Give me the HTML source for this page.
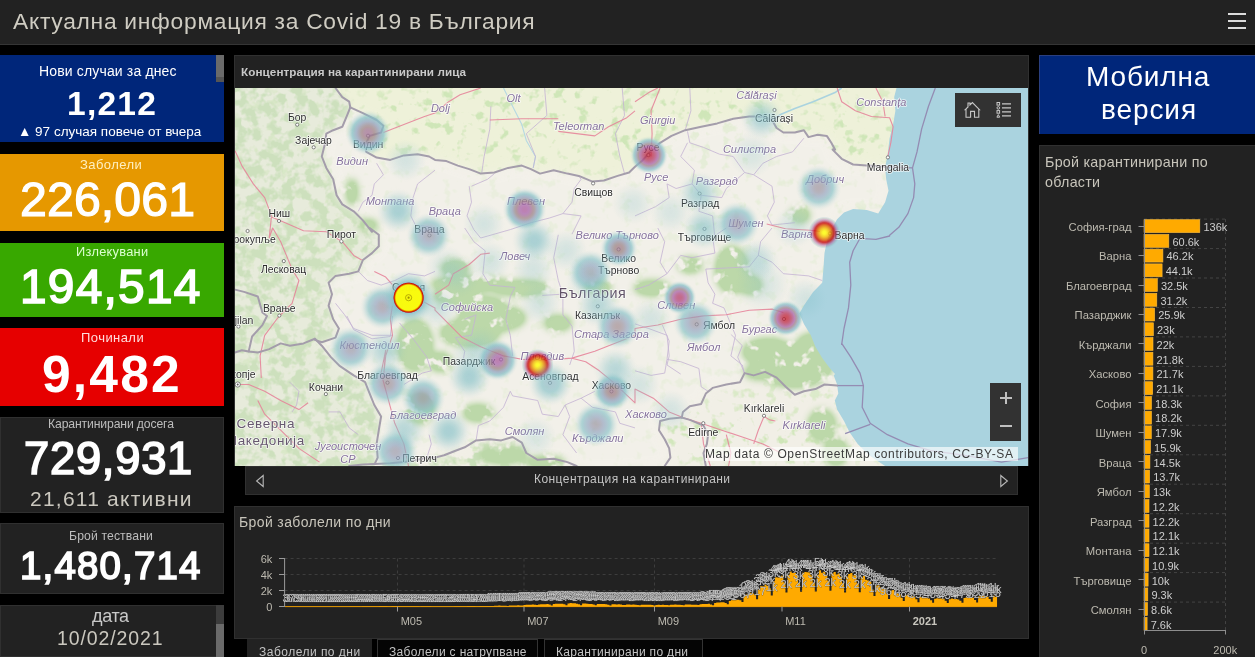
<!DOCTYPE html>
<html lang="bg">
<head>
<meta charset="utf-8">
<title>Актуална информация за Covid 19 в България</title>
<style>
html,body{margin:0;padding:0;background:#000;}
body{width:1255px;height:657px;overflow:hidden;position:relative;font-family:"Liberation Sans",sans-serif;color:#ccc;}
.abs{position:absolute;}
svg{will-change:transform;}
.t{position:absolute;white-space:nowrap;line-height:1;will-change:transform;}
.c{text-align:center;left:0;width:224px;}
#hdr{left:0;top:0;width:1255px;height:44px;background:#222;border-bottom:1px solid #353535;}
.card{position:absolute;left:0;width:224px;overflow:hidden;}
.dk{background:#222;box-shadow:inset 0 0 0 1px #303030;}
.panel{position:absolute;background:#222;box-shadow:inset 0 0 0 1px #303030;}
.big{color:#fff;-webkit-text-stroke:0.7px #fff;}
</style>
</head>
<body>
<div id="hdr" class="abs">
  <div class="abs" style="left:1228px;top:13px;width:18px;height:2px;background:#dcdcdc;box-shadow:0 7px 0 #dcdcdc,0 14px 0 #dcdcdc;"></div>
</div>

<!-- left column cards -->
<div class="card" style="top:55px;height:87px;background:#00267a;">
  <div class="abs" style="left:216px;top:0;width:8px;height:22px;background:#6a6a6a;"></div>
  <div class="abs" style="left:216px;top:22px;width:8px;height:5px;background:#555;"></div>
</div>
<div class="card" style="top:154px;height:77px;background:#e69800;"></div>
<div class="card" style="top:243px;height:74px;background:#38a800;"></div>
<div class="card" style="top:328px;height:78px;background:#e60000;"></div>
<div class="card dk" style="top:417px;height:96px;"></div>
<div class="card dk" style="top:523px;height:71px;"></div>
<div class="card dk" style="top:605px;height:52px;">
  <div class="abs" style="left:216px;top:0;width:8px;height:60px;background:#3c3c3c;"></div>
  <div class="abs" style="left:216px;top:19px;width:8px;height:41px;background:#6a6a6a;"></div>
</div>

<!-- right column -->
<div class="abs" style="left:1039px;top:55px;width:216px;height:79px;background:#00267a;box-shadow:inset 1px 1px 0 #2a3f7f;"></div>
<div class="panel" style="left:1039px;top:145px;width:220px;height:520px;"></div>

<!-- centre panels -->
<div class="panel" style="left:234px;top:55px;width:795px;height:411px;"></div>
<div class="panel" style="left:245px;top:466px;width:773px;height:29px;"></div>
<div class="panel" style="left:234px;top:506px;width:795px;height:133px;"></div>
<!-- tabs -->
<div class="abs" style="left:247px;top:639px;width:125px;height:25px;background:#222;"></div>
<div class="abs" style="left:377px;top:639px;width:161px;height:25px;background:#050505;box-shadow:inset 0 0 0 1px #333;"></div>
<div class="abs" style="left:544px;top:639px;width:159px;height:25px;background:#050505;box-shadow:inset 0 0 0 1px #333;"></div>
<svg class="abs" style="left:235px;top:88px;" width="793" height="378" viewBox="235 88 793 378" font-family="Liberation Sans, sans-serif">
<defs>
<filter id="ff" x="0" y="0" width="100%" height="100%" filterUnits="objectBoundingBox" color-interpolation-filters="sRGB">
<feGaussianBlur in="SourceAlpha" stdDeviation="3.5" result="m"/>
<feTurbulence type="fractalNoise" baseFrequency="0.07" numOctaves="3" seed="7" result="n"/>
<feColorMatrix in="n" type="matrix" values="0 0 0 0 0 0 0 0 0 0 0 0 0 0 0 6 0 0 0 -1.6" result="na"/>
<feComposite in="m" in2="na" operator="arithmetic" k1="1.6" k2="0" k3="0" k4="0" result="a"/>
<feFlood flood-color="#bcd8a9"/><feComposite operator="in" in2="a"/></filter>
<filter id="fl" x="0" y="0" width="100%" height="100%" color-interpolation-filters="sRGB">
<feGaussianBlur in="SourceAlpha" stdDeviation="10" result="m"/>
<feTurbulence type="fractalNoise" baseFrequency="0.09" numOctaves="3" seed="11" result="n"/>
<feColorMatrix in="n" type="matrix" values="0 0 0 0 0 0 0 0 0 0 0 0 0 0 0 6 0 0 0 -3.45" result="na"/>
<feComposite in="m" in2="na" operator="arithmetic" k1="1.2" k2="0" k3="0" k4="0" result="a"/>
<feFlood flood-color="#cfe6b8"/><feComposite operator="in" in2="a"/></filter>
<filter id="fw" x="0" y="0" width="100%" height="100%" color-interpolation-filters="sRGB">
<feGaussianBlur in="SourceAlpha" stdDeviation="3" result="m"/>
<feTurbulence type="fractalNoise" baseFrequency="0.085" numOctaves="3" seed="5" result="n"/>
<feColorMatrix in="n" type="matrix" values="0 0 0 0 0 0 0 0 0 0 0 0 0 0 0 6 0 0 0 -2.6" result="na"/>
<feComposite in="m" in2="na" operator="arithmetic" k1="1" k2="0" k3="0" k4="0" result="a"/>
<feFlood flood-color="#c9dfb9"/><feComposite operator="in" in2="a"/></filter>
<filter id="hz" x="-5%" y="-5%" width="110%" height="110%"><feGaussianBlur stdDeviation="5"/></filter>
<radialGradient id="h0"><stop offset="0.000" stop-color="rgb(162,113,151)" stop-opacity="0.74"/><stop offset="0.062" stop-color="rgb(161,114,150)" stop-opacity="0.74"/><stop offset="0.125" stop-color="rgb(160,116,147)" stop-opacity="0.74"/><stop offset="0.188" stop-color="rgb(159,120,142)" stop-opacity="0.74"/><stop offset="0.250" stop-color="rgb(157,126,135)" stop-opacity="0.74"/><stop offset="0.312" stop-color="rgb(154,134,140)" stop-opacity="0.74"/><stop offset="0.375" stop-color="rgb(151,142,156)" stop-opacity="0.74"/><stop offset="0.438" stop-color="rgb(148,152,173)" stop-opacity="0.74"/><stop offset="0.500" stop-color="rgb(144,162,190)" stop-opacity="0.74"/><stop offset="0.562" stop-color="rgb(140,173,194)" stop-opacity="0.74"/><stop offset="0.625" stop-color="rgb(136,183,197)" stop-opacity="0.74"/><stop offset="0.688" stop-color="rgb(133,193,200)" stop-opacity="0.72"/><stop offset="0.750" stop-color="rgb(133,193,200)" stop-opacity="0.50"/><stop offset="0.812" stop-color="rgb(133,193,200)" stop-opacity="0.30"/><stop offset="0.875" stop-color="rgb(133,193,200)" stop-opacity="0.14"/><stop offset="0.938" stop-color="rgb(133,193,200)" stop-opacity="0.04"/><stop offset="1.000" stop-color="rgb(133,193,200)" stop-opacity="0.00"/></radialGradient>
<radialGradient id="h1"><stop offset="0.000" stop-color="rgb(133,193,200)" stop-opacity="0.27"/><stop offset="0.062" stop-color="rgb(133,193,200)" stop-opacity="0.27"/><stop offset="0.125" stop-color="rgb(133,193,200)" stop-opacity="0.26"/><stop offset="0.188" stop-color="rgb(133,193,200)" stop-opacity="0.25"/><stop offset="0.250" stop-color="rgb(133,193,200)" stop-opacity="0.24"/><stop offset="0.312" stop-color="rgb(133,193,200)" stop-opacity="0.22"/><stop offset="0.375" stop-color="rgb(133,193,200)" stop-opacity="0.20"/><stop offset="0.438" stop-color="rgb(133,193,200)" stop-opacity="0.18"/><stop offset="0.500" stop-color="rgb(133,193,200)" stop-opacity="0.15"/><stop offset="0.562" stop-color="rgb(133,193,200)" stop-opacity="0.13"/><stop offset="0.625" stop-color="rgb(133,193,200)" stop-opacity="0.10"/><stop offset="0.688" stop-color="rgb(133,193,200)" stop-opacity="0.08"/><stop offset="0.750" stop-color="rgb(133,193,200)" stop-opacity="0.05"/><stop offset="0.812" stop-color="rgb(133,193,200)" stop-opacity="0.03"/><stop offset="0.875" stop-color="rgb(133,193,200)" stop-opacity="0.01"/><stop offset="0.938" stop-color="rgb(133,193,200)" stop-opacity="0.00"/><stop offset="1.000" stop-color="rgb(133,193,200)" stop-opacity="0.00"/></radialGradient>
<radialGradient id="h2"><stop offset="0.000" stop-color="rgb(134,191,200)" stop-opacity="0.66"/><stop offset="0.062" stop-color="rgb(133,192,200)" stop-opacity="0.66"/><stop offset="0.125" stop-color="rgb(133,192,200)" stop-opacity="0.66"/><stop offset="0.188" stop-color="rgb(133,193,200)" stop-opacity="0.64"/><stop offset="0.250" stop-color="rgb(133,193,200)" stop-opacity="0.61"/><stop offset="0.312" stop-color="rgb(133,193,200)" stop-opacity="0.56"/><stop offset="0.375" stop-color="rgb(133,193,200)" stop-opacity="0.51"/><stop offset="0.438" stop-color="rgb(133,193,200)" stop-opacity="0.45"/><stop offset="0.500" stop-color="rgb(133,193,200)" stop-opacity="0.39"/><stop offset="0.562" stop-color="rgb(133,193,200)" stop-opacity="0.32"/><stop offset="0.625" stop-color="rgb(133,193,200)" stop-opacity="0.26"/><stop offset="0.688" stop-color="rgb(133,193,200)" stop-opacity="0.19"/><stop offset="0.750" stop-color="rgb(133,193,200)" stop-opacity="0.13"/><stop offset="0.812" stop-color="rgb(133,193,200)" stop-opacity="0.08"/><stop offset="0.875" stop-color="rgb(133,193,200)" stop-opacity="0.04"/><stop offset="0.938" stop-color="rgb(133,193,200)" stop-opacity="0.01"/><stop offset="1.000" stop-color="rgb(133,193,200)" stop-opacity="0.00"/></radialGradient>
<radialGradient id="h3"><stop offset="0.000" stop-color="rgb(149,149,168)" stop-opacity="0.66"/><stop offset="0.062" stop-color="rgb(148,149,169)" stop-opacity="0.66"/><stop offset="0.125" stop-color="rgb(148,151,172)" stop-opacity="0.66"/><stop offset="0.188" stop-color="rgb(147,154,177)" stop-opacity="0.66"/><stop offset="0.250" stop-color="rgb(145,158,184)" stop-opacity="0.66"/><stop offset="0.312" stop-color="rgb(143,163,191)" stop-opacity="0.66"/><stop offset="0.375" stop-color="rgb(141,169,192)" stop-opacity="0.66"/><stop offset="0.438" stop-color="rgb(139,175,194)" stop-opacity="0.66"/><stop offset="0.500" stop-color="rgb(137,182,197)" stop-opacity="0.66"/><stop offset="0.562" stop-color="rgb(134,189,199)" stop-opacity="0.66"/><stop offset="0.625" stop-color="rgb(133,193,200)" stop-opacity="0.58"/><stop offset="0.688" stop-color="rgb(133,193,200)" stop-opacity="0.44"/><stop offset="0.750" stop-color="rgb(133,193,200)" stop-opacity="0.30"/><stop offset="0.812" stop-color="rgb(133,193,200)" stop-opacity="0.18"/><stop offset="0.875" stop-color="rgb(133,193,200)" stop-opacity="0.09"/><stop offset="0.938" stop-color="rgb(133,193,200)" stop-opacity="0.02"/><stop offset="1.000" stop-color="rgb(133,193,200)" stop-opacity="0.00"/></radialGradient>
<radialGradient id="h4"><stop offset="0.000" stop-color="rgb(133,193,200)" stop-opacity="0.27"/><stop offset="0.062" stop-color="rgb(133,193,200)" stop-opacity="0.27"/><stop offset="0.125" stop-color="rgb(133,193,200)" stop-opacity="0.26"/><stop offset="0.188" stop-color="rgb(133,193,200)" stop-opacity="0.25"/><stop offset="0.250" stop-color="rgb(133,193,200)" stop-opacity="0.24"/><stop offset="0.312" stop-color="rgb(133,193,200)" stop-opacity="0.22"/><stop offset="0.375" stop-color="rgb(133,193,200)" stop-opacity="0.20"/><stop offset="0.438" stop-color="rgb(133,193,200)" stop-opacity="0.18"/><stop offset="0.500" stop-color="rgb(133,193,200)" stop-opacity="0.15"/><stop offset="0.562" stop-color="rgb(133,193,200)" stop-opacity="0.13"/><stop offset="0.625" stop-color="rgb(133,193,200)" stop-opacity="0.10"/><stop offset="0.688" stop-color="rgb(133,193,200)" stop-opacity="0.08"/><stop offset="0.750" stop-color="rgb(133,193,200)" stop-opacity="0.05"/><stop offset="0.812" stop-color="rgb(133,193,200)" stop-opacity="0.03"/><stop offset="0.875" stop-color="rgb(133,193,200)" stop-opacity="0.01"/><stop offset="0.938" stop-color="rgb(133,193,200)" stop-opacity="0.00"/><stop offset="1.000" stop-color="rgb(133,193,200)" stop-opacity="0.00"/></radialGradient>
<radialGradient id="h5"><stop offset="0.000" stop-color="rgb(133,193,200)" stop-opacity="0.27"/><stop offset="0.062" stop-color="rgb(133,193,200)" stop-opacity="0.27"/><stop offset="0.125" stop-color="rgb(133,193,200)" stop-opacity="0.26"/><stop offset="0.188" stop-color="rgb(133,193,200)" stop-opacity="0.25"/><stop offset="0.250" stop-color="rgb(133,193,200)" stop-opacity="0.24"/><stop offset="0.312" stop-color="rgb(133,193,200)" stop-opacity="0.22"/><stop offset="0.375" stop-color="rgb(133,193,200)" stop-opacity="0.20"/><stop offset="0.438" stop-color="rgb(133,193,200)" stop-opacity="0.18"/><stop offset="0.500" stop-color="rgb(133,193,200)" stop-opacity="0.15"/><stop offset="0.562" stop-color="rgb(133,193,200)" stop-opacity="0.13"/><stop offset="0.625" stop-color="rgb(133,193,200)" stop-opacity="0.10"/><stop offset="0.688" stop-color="rgb(133,193,200)" stop-opacity="0.08"/><stop offset="0.750" stop-color="rgb(133,193,200)" stop-opacity="0.05"/><stop offset="0.812" stop-color="rgb(133,193,200)" stop-opacity="0.03"/><stop offset="0.875" stop-color="rgb(133,193,200)" stop-opacity="0.01"/><stop offset="0.938" stop-color="rgb(133,193,200)" stop-opacity="0.00"/><stop offset="1.000" stop-color="rgb(133,193,200)" stop-opacity="0.00"/></radialGradient>
<radialGradient id="h6"><stop offset="0.000" stop-color="rgb(169,90,158)" stop-opacity="0.74"/><stop offset="0.062" stop-color="rgb(169,91,159)" stop-opacity="0.74"/><stop offset="0.125" stop-color="rgb(168,93,163)" stop-opacity="0.74"/><stop offset="0.188" stop-color="rgb(167,97,170)" stop-opacity="0.74"/><stop offset="0.250" stop-color="rgb(164,104,161)" stop-opacity="0.74"/><stop offset="0.312" stop-color="rgb(161,113,151)" stop-opacity="0.74"/><stop offset="0.375" stop-color="rgb(158,124,138)" stop-opacity="0.74"/><stop offset="0.438" stop-color="rgb(154,135,143)" stop-opacity="0.74"/><stop offset="0.500" stop-color="rgb(149,148,166)" stop-opacity="0.74"/><stop offset="0.562" stop-color="rgb(144,161,190)" stop-opacity="0.74"/><stop offset="0.625" stop-color="rgb(140,174,194)" stop-opacity="0.74"/><stop offset="0.688" stop-color="rgb(135,187,198)" stop-opacity="0.74"/><stop offset="0.750" stop-color="rgb(133,193,200)" stop-opacity="0.61"/><stop offset="0.812" stop-color="rgb(133,193,200)" stop-opacity="0.37"/><stop offset="0.875" stop-color="rgb(133,193,200)" stop-opacity="0.17"/><stop offset="0.938" stop-color="rgb(133,193,200)" stop-opacity="0.05"/><stop offset="1.000" stop-color="rgb(133,193,200)" stop-opacity="0.00"/></radialGradient>
<radialGradient id="h7"><stop offset="0.000" stop-color="rgb(190,31,55)" stop-opacity="0.74"/><stop offset="0.062" stop-color="rgb(189,33,57)" stop-opacity="0.74"/><stop offset="0.125" stop-color="rgb(188,36,64)" stop-opacity="0.74"/><stop offset="0.188" stop-color="rgb(186,42,75)" stop-opacity="0.74"/><stop offset="0.250" stop-color="rgb(183,51,90)" stop-opacity="0.74"/><stop offset="0.312" stop-color="rgb(179,62,109)" stop-opacity="0.74"/><stop offset="0.375" stop-color="rgb(175,74,130)" stop-opacity="0.74"/><stop offset="0.438" stop-color="rgb(170,88,154)" stop-opacity="0.74"/><stop offset="0.500" stop-color="rgb(164,104,161)" stop-opacity="0.74"/><stop offset="0.562" stop-color="rgb(157,125,137)" stop-opacity="0.74"/><stop offset="0.625" stop-color="rgb(150,145,162)" stop-opacity="0.74"/><stop offset="0.688" stop-color="rgb(142,165,191)" stop-opacity="0.74"/><stop offset="0.750" stop-color="rgb(136,184,197)" stop-opacity="0.74"/><stop offset="0.812" stop-color="rgb(133,193,200)" stop-opacity="0.57"/><stop offset="0.875" stop-color="rgb(133,193,200)" stop-opacity="0.27"/><stop offset="0.938" stop-color="rgb(133,193,200)" stop-opacity="0.07"/><stop offset="1.000" stop-color="rgb(133,193,200)" stop-opacity="0.00"/></radialGradient>
<radialGradient id="h8"><stop offset="0.000" stop-color="rgb(134,191,200)" stop-opacity="0.66"/><stop offset="0.062" stop-color="rgb(133,192,200)" stop-opacity="0.66"/><stop offset="0.125" stop-color="rgb(133,192,200)" stop-opacity="0.66"/><stop offset="0.188" stop-color="rgb(133,193,200)" stop-opacity="0.64"/><stop offset="0.250" stop-color="rgb(133,193,200)" stop-opacity="0.61"/><stop offset="0.312" stop-color="rgb(133,193,200)" stop-opacity="0.56"/><stop offset="0.375" stop-color="rgb(133,193,200)" stop-opacity="0.51"/><stop offset="0.438" stop-color="rgb(133,193,200)" stop-opacity="0.45"/><stop offset="0.500" stop-color="rgb(133,193,200)" stop-opacity="0.39"/><stop offset="0.562" stop-color="rgb(133,193,200)" stop-opacity="0.32"/><stop offset="0.625" stop-color="rgb(133,193,200)" stop-opacity="0.26"/><stop offset="0.688" stop-color="rgb(133,193,200)" stop-opacity="0.19"/><stop offset="0.750" stop-color="rgb(133,193,200)" stop-opacity="0.13"/><stop offset="0.812" stop-color="rgb(133,193,200)" stop-opacity="0.08"/><stop offset="0.875" stop-color="rgb(133,193,200)" stop-opacity="0.04"/><stop offset="0.938" stop-color="rgb(133,193,200)" stop-opacity="0.01"/><stop offset="1.000" stop-color="rgb(133,193,200)" stop-opacity="0.00"/></radialGradient>
<radialGradient id="h9"><stop offset="0.000" stop-color="rgb(133,193,200)" stop-opacity="0.27"/><stop offset="0.062" stop-color="rgb(133,193,200)" stop-opacity="0.27"/><stop offset="0.125" stop-color="rgb(133,193,200)" stop-opacity="0.26"/><stop offset="0.188" stop-color="rgb(133,193,200)" stop-opacity="0.25"/><stop offset="0.250" stop-color="rgb(133,193,200)" stop-opacity="0.24"/><stop offset="0.312" stop-color="rgb(133,193,200)" stop-opacity="0.22"/><stop offset="0.375" stop-color="rgb(133,193,200)" stop-opacity="0.20"/><stop offset="0.438" stop-color="rgb(133,193,200)" stop-opacity="0.18"/><stop offset="0.500" stop-color="rgb(133,193,200)" stop-opacity="0.15"/><stop offset="0.562" stop-color="rgb(133,193,200)" stop-opacity="0.13"/><stop offset="0.625" stop-color="rgb(133,193,200)" stop-opacity="0.10"/><stop offset="0.688" stop-color="rgb(133,193,200)" stop-opacity="0.08"/><stop offset="0.750" stop-color="rgb(133,193,200)" stop-opacity="0.05"/><stop offset="0.812" stop-color="rgb(133,193,200)" stop-opacity="0.03"/><stop offset="0.875" stop-color="rgb(133,193,200)" stop-opacity="0.01"/><stop offset="0.938" stop-color="rgb(133,193,200)" stop-opacity="0.00"/><stop offset="1.000" stop-color="rgb(133,193,200)" stop-opacity="0.00"/></radialGradient>
<radialGradient id="h10"><stop offset="0.000" stop-color="rgb(149,149,168)" stop-opacity="0.66"/><stop offset="0.062" stop-color="rgb(148,149,169)" stop-opacity="0.66"/><stop offset="0.125" stop-color="rgb(148,151,172)" stop-opacity="0.66"/><stop offset="0.188" stop-color="rgb(147,154,177)" stop-opacity="0.66"/><stop offset="0.250" stop-color="rgb(145,158,184)" stop-opacity="0.66"/><stop offset="0.312" stop-color="rgb(143,163,191)" stop-opacity="0.66"/><stop offset="0.375" stop-color="rgb(141,169,192)" stop-opacity="0.66"/><stop offset="0.438" stop-color="rgb(139,175,194)" stop-opacity="0.66"/><stop offset="0.500" stop-color="rgb(137,182,197)" stop-opacity="0.66"/><stop offset="0.562" stop-color="rgb(134,189,199)" stop-opacity="0.66"/><stop offset="0.625" stop-color="rgb(133,193,200)" stop-opacity="0.58"/><stop offset="0.688" stop-color="rgb(133,193,200)" stop-opacity="0.44"/><stop offset="0.750" stop-color="rgb(133,193,200)" stop-opacity="0.30"/><stop offset="0.812" stop-color="rgb(133,193,200)" stop-opacity="0.18"/><stop offset="0.875" stop-color="rgb(133,193,200)" stop-opacity="0.09"/><stop offset="0.938" stop-color="rgb(133,193,200)" stop-opacity="0.02"/><stop offset="1.000" stop-color="rgb(133,193,200)" stop-opacity="0.00"/></radialGradient>
<radialGradient id="h11"><stop offset="0.000" stop-color="rgb(159,121,142)" stop-opacity="0.74"/><stop offset="0.062" stop-color="rgb(158,122,141)" stop-opacity="0.74"/><stop offset="0.125" stop-color="rgb(158,124,138)" stop-opacity="0.74"/><stop offset="0.188" stop-color="rgb(156,128,133)" stop-opacity="0.74"/><stop offset="0.250" stop-color="rgb(154,134,140)" stop-opacity="0.74"/><stop offset="0.312" stop-color="rgb(152,140,153)" stop-opacity="0.74"/><stop offset="0.375" stop-color="rgb(149,148,167)" stop-opacity="0.74"/><stop offset="0.438" stop-color="rgb(145,157,183)" stop-opacity="0.74"/><stop offset="0.500" stop-color="rgb(142,166,192)" stop-opacity="0.74"/><stop offset="0.562" stop-color="rgb(139,176,195)" stop-opacity="0.74"/><stop offset="0.625" stop-color="rgb(135,186,198)" stop-opacity="0.74"/><stop offset="0.688" stop-color="rgb(133,193,200)" stop-opacity="0.67"/><stop offset="0.750" stop-color="rgb(133,193,200)" stop-opacity="0.46"/><stop offset="0.812" stop-color="rgb(133,193,200)" stop-opacity="0.28"/><stop offset="0.875" stop-color="rgb(133,193,200)" stop-opacity="0.13"/><stop offset="0.938" stop-color="rgb(133,193,200)" stop-opacity="0.04"/><stop offset="1.000" stop-color="rgb(133,193,200)" stop-opacity="0.00"/></radialGradient>
<radialGradient id="h12"><stop offset="0.000" stop-color="rgb(133,193,200)" stop-opacity="0.27"/><stop offset="0.062" stop-color="rgb(133,193,200)" stop-opacity="0.27"/><stop offset="0.125" stop-color="rgb(133,193,200)" stop-opacity="0.26"/><stop offset="0.188" stop-color="rgb(133,193,200)" stop-opacity="0.25"/><stop offset="0.250" stop-color="rgb(133,193,200)" stop-opacity="0.24"/><stop offset="0.312" stop-color="rgb(133,193,200)" stop-opacity="0.22"/><stop offset="0.375" stop-color="rgb(133,193,200)" stop-opacity="0.20"/><stop offset="0.438" stop-color="rgb(133,193,200)" stop-opacity="0.18"/><stop offset="0.500" stop-color="rgb(133,193,200)" stop-opacity="0.15"/><stop offset="0.562" stop-color="rgb(133,193,200)" stop-opacity="0.13"/><stop offset="0.625" stop-color="rgb(133,193,200)" stop-opacity="0.10"/><stop offset="0.688" stop-color="rgb(133,193,200)" stop-opacity="0.08"/><stop offset="0.750" stop-color="rgb(133,193,200)" stop-opacity="0.05"/><stop offset="0.812" stop-color="rgb(133,193,200)" stop-opacity="0.03"/><stop offset="0.875" stop-color="rgb(133,193,200)" stop-opacity="0.01"/><stop offset="0.938" stop-color="rgb(133,193,200)" stop-opacity="0.00"/><stop offset="1.000" stop-color="rgb(133,193,200)" stop-opacity="0.00"/></radialGradient>
<radialGradient id="h13"><stop offset="0.000" stop-color="rgb(133,193,200)" stop-opacity="0.23"/><stop offset="0.062" stop-color="rgb(133,193,200)" stop-opacity="0.23"/><stop offset="0.125" stop-color="rgb(133,193,200)" stop-opacity="0.22"/><stop offset="0.188" stop-color="rgb(133,193,200)" stop-opacity="0.22"/><stop offset="0.250" stop-color="rgb(133,193,200)" stop-opacity="0.20"/><stop offset="0.312" stop-color="rgb(133,193,200)" stop-opacity="0.19"/><stop offset="0.375" stop-color="rgb(133,193,200)" stop-opacity="0.17"/><stop offset="0.438" stop-color="rgb(133,193,200)" stop-opacity="0.15"/><stop offset="0.500" stop-color="rgb(133,193,200)" stop-opacity="0.13"/><stop offset="0.562" stop-color="rgb(133,193,200)" stop-opacity="0.11"/><stop offset="0.625" stop-color="rgb(133,193,200)" stop-opacity="0.09"/><stop offset="0.688" stop-color="rgb(133,193,200)" stop-opacity="0.06"/><stop offset="0.750" stop-color="rgb(133,193,200)" stop-opacity="0.04"/><stop offset="0.812" stop-color="rgb(133,193,200)" stop-opacity="0.03"/><stop offset="0.875" stop-color="rgb(133,193,200)" stop-opacity="0.01"/><stop offset="0.938" stop-color="rgb(133,193,200)" stop-opacity="0.00"/><stop offset="1.000" stop-color="rgb(133,193,200)" stop-opacity="0.00"/></radialGradient>
<radialGradient id="h14"><stop offset="0.000" stop-color="rgb(133,193,200)" stop-opacity="0.23"/><stop offset="0.062" stop-color="rgb(133,193,200)" stop-opacity="0.23"/><stop offset="0.125" stop-color="rgb(133,193,200)" stop-opacity="0.22"/><stop offset="0.188" stop-color="rgb(133,193,200)" stop-opacity="0.22"/><stop offset="0.250" stop-color="rgb(133,193,200)" stop-opacity="0.20"/><stop offset="0.312" stop-color="rgb(133,193,200)" stop-opacity="0.19"/><stop offset="0.375" stop-color="rgb(133,193,200)" stop-opacity="0.17"/><stop offset="0.438" stop-color="rgb(133,193,200)" stop-opacity="0.15"/><stop offset="0.500" stop-color="rgb(133,193,200)" stop-opacity="0.13"/><stop offset="0.562" stop-color="rgb(133,193,200)" stop-opacity="0.11"/><stop offset="0.625" stop-color="rgb(133,193,200)" stop-opacity="0.09"/><stop offset="0.688" stop-color="rgb(133,193,200)" stop-opacity="0.06"/><stop offset="0.750" stop-color="rgb(133,193,200)" stop-opacity="0.04"/><stop offset="0.812" stop-color="rgb(133,193,200)" stop-opacity="0.03"/><stop offset="0.875" stop-color="rgb(133,193,200)" stop-opacity="0.01"/><stop offset="0.938" stop-color="rgb(133,193,200)" stop-opacity="0.00"/><stop offset="1.000" stop-color="rgb(133,193,200)" stop-opacity="0.00"/></radialGradient>
<radialGradient id="h15"><stop offset="0.000" stop-color="rgb(133,193,200)" stop-opacity="0.27"/><stop offset="0.062" stop-color="rgb(133,193,200)" stop-opacity="0.27"/><stop offset="0.125" stop-color="rgb(133,193,200)" stop-opacity="0.26"/><stop offset="0.188" stop-color="rgb(133,193,200)" stop-opacity="0.25"/><stop offset="0.250" stop-color="rgb(133,193,200)" stop-opacity="0.24"/><stop offset="0.312" stop-color="rgb(133,193,200)" stop-opacity="0.22"/><stop offset="0.375" stop-color="rgb(133,193,200)" stop-opacity="0.20"/><stop offset="0.438" stop-color="rgb(133,193,200)" stop-opacity="0.18"/><stop offset="0.500" stop-color="rgb(133,193,200)" stop-opacity="0.15"/><stop offset="0.562" stop-color="rgb(133,193,200)" stop-opacity="0.13"/><stop offset="0.625" stop-color="rgb(133,193,200)" stop-opacity="0.10"/><stop offset="0.688" stop-color="rgb(133,193,200)" stop-opacity="0.08"/><stop offset="0.750" stop-color="rgb(133,193,200)" stop-opacity="0.05"/><stop offset="0.812" stop-color="rgb(133,193,200)" stop-opacity="0.03"/><stop offset="0.875" stop-color="rgb(133,193,200)" stop-opacity="0.01"/><stop offset="0.938" stop-color="rgb(133,193,200)" stop-opacity="0.00"/><stop offset="1.000" stop-color="rgb(133,193,200)" stop-opacity="0.00"/></radialGradient>
<radialGradient id="h16"><stop offset="0.000" stop-color="rgb(133,193,200)" stop-opacity="0.61"/><stop offset="0.062" stop-color="rgb(133,193,200)" stop-opacity="0.60"/><stop offset="0.125" stop-color="rgb(133,193,200)" stop-opacity="0.59"/><stop offset="0.188" stop-color="rgb(133,193,200)" stop-opacity="0.57"/><stop offset="0.250" stop-color="rgb(133,193,200)" stop-opacity="0.53"/><stop offset="0.312" stop-color="rgb(133,193,200)" stop-opacity="0.50"/><stop offset="0.375" stop-color="rgb(133,193,200)" stop-opacity="0.45"/><stop offset="0.438" stop-color="rgb(133,193,200)" stop-opacity="0.40"/><stop offset="0.500" stop-color="rgb(133,193,200)" stop-opacity="0.34"/><stop offset="0.562" stop-color="rgb(133,193,200)" stop-opacity="0.28"/><stop offset="0.625" stop-color="rgb(133,193,200)" stop-opacity="0.23"/><stop offset="0.688" stop-color="rgb(133,193,200)" stop-opacity="0.17"/><stop offset="0.750" stop-color="rgb(133,193,200)" stop-opacity="0.12"/><stop offset="0.812" stop-color="rgb(133,193,200)" stop-opacity="0.07"/><stop offset="0.875" stop-color="rgb(133,193,200)" stop-opacity="0.03"/><stop offset="0.938" stop-color="rgb(133,193,200)" stop-opacity="0.01"/><stop offset="1.000" stop-color="rgb(133,193,200)" stop-opacity="0.00"/></radialGradient>
<radialGradient id="h17"><stop offset="0.000" stop-color="rgb(133,193,200)" stop-opacity="0.61"/><stop offset="0.062" stop-color="rgb(133,193,200)" stop-opacity="0.60"/><stop offset="0.125" stop-color="rgb(133,193,200)" stop-opacity="0.59"/><stop offset="0.188" stop-color="rgb(133,193,200)" stop-opacity="0.57"/><stop offset="0.250" stop-color="rgb(133,193,200)" stop-opacity="0.53"/><stop offset="0.312" stop-color="rgb(133,193,200)" stop-opacity="0.50"/><stop offset="0.375" stop-color="rgb(133,193,200)" stop-opacity="0.45"/><stop offset="0.438" stop-color="rgb(133,193,200)" stop-opacity="0.40"/><stop offset="0.500" stop-color="rgb(133,193,200)" stop-opacity="0.34"/><stop offset="0.562" stop-color="rgb(133,193,200)" stop-opacity="0.28"/><stop offset="0.625" stop-color="rgb(133,193,200)" stop-opacity="0.23"/><stop offset="0.688" stop-color="rgb(133,193,200)" stop-opacity="0.17"/><stop offset="0.750" stop-color="rgb(133,193,200)" stop-opacity="0.12"/><stop offset="0.812" stop-color="rgb(133,193,200)" stop-opacity="0.07"/><stop offset="0.875" stop-color="rgb(133,193,200)" stop-opacity="0.03"/><stop offset="0.938" stop-color="rgb(133,193,200)" stop-opacity="0.01"/><stop offset="1.000" stop-color="rgb(133,193,200)" stop-opacity="0.00"/></radialGradient>
<radialGradient id="h18"><stop offset="0.000" stop-color="rgb(149,149,168)" stop-opacity="0.66"/><stop offset="0.062" stop-color="rgb(148,149,169)" stop-opacity="0.66"/><stop offset="0.125" stop-color="rgb(148,151,172)" stop-opacity="0.66"/><stop offset="0.188" stop-color="rgb(147,154,177)" stop-opacity="0.66"/><stop offset="0.250" stop-color="rgb(145,158,184)" stop-opacity="0.66"/><stop offset="0.312" stop-color="rgb(143,163,191)" stop-opacity="0.66"/><stop offset="0.375" stop-color="rgb(141,169,192)" stop-opacity="0.66"/><stop offset="0.438" stop-color="rgb(139,175,194)" stop-opacity="0.66"/><stop offset="0.500" stop-color="rgb(137,182,197)" stop-opacity="0.66"/><stop offset="0.562" stop-color="rgb(134,189,199)" stop-opacity="0.66"/><stop offset="0.625" stop-color="rgb(133,193,200)" stop-opacity="0.58"/><stop offset="0.688" stop-color="rgb(133,193,200)" stop-opacity="0.44"/><stop offset="0.750" stop-color="rgb(133,193,200)" stop-opacity="0.30"/><stop offset="0.812" stop-color="rgb(133,193,200)" stop-opacity="0.18"/><stop offset="0.875" stop-color="rgb(133,193,200)" stop-opacity="0.09"/><stop offset="0.938" stop-color="rgb(133,193,200)" stop-opacity="0.02"/><stop offset="1.000" stop-color="rgb(133,193,200)" stop-opacity="0.00"/></radialGradient>
<radialGradient id="h19"><stop offset="0.000" stop-color="rgb(133,193,200)" stop-opacity="0.23"/><stop offset="0.062" stop-color="rgb(133,193,200)" stop-opacity="0.23"/><stop offset="0.125" stop-color="rgb(133,193,200)" stop-opacity="0.22"/><stop offset="0.188" stop-color="rgb(133,193,200)" stop-opacity="0.22"/><stop offset="0.250" stop-color="rgb(133,193,200)" stop-opacity="0.20"/><stop offset="0.312" stop-color="rgb(133,193,200)" stop-opacity="0.19"/><stop offset="0.375" stop-color="rgb(133,193,200)" stop-opacity="0.17"/><stop offset="0.438" stop-color="rgb(133,193,200)" stop-opacity="0.15"/><stop offset="0.500" stop-color="rgb(133,193,200)" stop-opacity="0.13"/><stop offset="0.562" stop-color="rgb(133,193,200)" stop-opacity="0.11"/><stop offset="0.625" stop-color="rgb(133,193,200)" stop-opacity="0.09"/><stop offset="0.688" stop-color="rgb(133,193,200)" stop-opacity="0.06"/><stop offset="0.750" stop-color="rgb(133,193,200)" stop-opacity="0.04"/><stop offset="0.812" stop-color="rgb(133,193,200)" stop-opacity="0.03"/><stop offset="0.875" stop-color="rgb(133,193,200)" stop-opacity="0.01"/><stop offset="0.938" stop-color="rgb(133,193,200)" stop-opacity="0.00"/><stop offset="1.000" stop-color="rgb(133,193,200)" stop-opacity="0.00"/></radialGradient>
<radialGradient id="h20"><stop offset="0.000" stop-color="rgb(133,193,200)" stop-opacity="0.23"/><stop offset="0.062" stop-color="rgb(133,193,200)" stop-opacity="0.23"/><stop offset="0.125" stop-color="rgb(133,193,200)" stop-opacity="0.22"/><stop offset="0.188" stop-color="rgb(133,193,200)" stop-opacity="0.22"/><stop offset="0.250" stop-color="rgb(133,193,200)" stop-opacity="0.20"/><stop offset="0.312" stop-color="rgb(133,193,200)" stop-opacity="0.19"/><stop offset="0.375" stop-color="rgb(133,193,200)" stop-opacity="0.17"/><stop offset="0.438" stop-color="rgb(133,193,200)" stop-opacity="0.15"/><stop offset="0.500" stop-color="rgb(133,193,200)" stop-opacity="0.13"/><stop offset="0.562" stop-color="rgb(133,193,200)" stop-opacity="0.11"/><stop offset="0.625" stop-color="rgb(133,193,200)" stop-opacity="0.09"/><stop offset="0.688" stop-color="rgb(133,193,200)" stop-opacity="0.06"/><stop offset="0.750" stop-color="rgb(133,193,200)" stop-opacity="0.04"/><stop offset="0.812" stop-color="rgb(133,193,200)" stop-opacity="0.03"/><stop offset="0.875" stop-color="rgb(133,193,200)" stop-opacity="0.01"/><stop offset="0.938" stop-color="rgb(133,193,200)" stop-opacity="0.00"/><stop offset="1.000" stop-color="rgb(133,193,200)" stop-opacity="0.00"/></radialGradient>
<radialGradient id="h21"><stop offset="0.000" stop-color="rgb(133,193,200)" stop-opacity="0.61"/><stop offset="0.062" stop-color="rgb(133,193,200)" stop-opacity="0.60"/><stop offset="0.125" stop-color="rgb(133,193,200)" stop-opacity="0.59"/><stop offset="0.188" stop-color="rgb(133,193,200)" stop-opacity="0.57"/><stop offset="0.250" stop-color="rgb(133,193,200)" stop-opacity="0.53"/><stop offset="0.312" stop-color="rgb(133,193,200)" stop-opacity="0.50"/><stop offset="0.375" stop-color="rgb(133,193,200)" stop-opacity="0.45"/><stop offset="0.438" stop-color="rgb(133,193,200)" stop-opacity="0.40"/><stop offset="0.500" stop-color="rgb(133,193,200)" stop-opacity="0.34"/><stop offset="0.562" stop-color="rgb(133,193,200)" stop-opacity="0.28"/><stop offset="0.625" stop-color="rgb(133,193,200)" stop-opacity="0.23"/><stop offset="0.688" stop-color="rgb(133,193,200)" stop-opacity="0.17"/><stop offset="0.750" stop-color="rgb(133,193,200)" stop-opacity="0.12"/><stop offset="0.812" stop-color="rgb(133,193,200)" stop-opacity="0.07"/><stop offset="0.875" stop-color="rgb(133,193,200)" stop-opacity="0.03"/><stop offset="0.938" stop-color="rgb(133,193,200)" stop-opacity="0.01"/><stop offset="1.000" stop-color="rgb(133,193,200)" stop-opacity="0.00"/></radialGradient>
<radialGradient id="h22"><stop offset="0.000" stop-color="rgb(133,193,200)" stop-opacity="0.27"/><stop offset="0.062" stop-color="rgb(133,193,200)" stop-opacity="0.27"/><stop offset="0.125" stop-color="rgb(133,193,200)" stop-opacity="0.26"/><stop offset="0.188" stop-color="rgb(133,193,200)" stop-opacity="0.25"/><stop offset="0.250" stop-color="rgb(133,193,200)" stop-opacity="0.24"/><stop offset="0.312" stop-color="rgb(133,193,200)" stop-opacity="0.22"/><stop offset="0.375" stop-color="rgb(133,193,200)" stop-opacity="0.20"/><stop offset="0.438" stop-color="rgb(133,193,200)" stop-opacity="0.18"/><stop offset="0.500" stop-color="rgb(133,193,200)" stop-opacity="0.15"/><stop offset="0.562" stop-color="rgb(133,193,200)" stop-opacity="0.13"/><stop offset="0.625" stop-color="rgb(133,193,200)" stop-opacity="0.10"/><stop offset="0.688" stop-color="rgb(133,193,200)" stop-opacity="0.08"/><stop offset="0.750" stop-color="rgb(133,193,200)" stop-opacity="0.05"/><stop offset="0.812" stop-color="rgb(133,193,200)" stop-opacity="0.03"/><stop offset="0.875" stop-color="rgb(133,193,200)" stop-opacity="0.01"/><stop offset="0.938" stop-color="rgb(133,193,200)" stop-opacity="0.00"/><stop offset="1.000" stop-color="rgb(133,193,200)" stop-opacity="0.00"/></radialGradient>
<radialGradient id="h23"><stop offset="0.000" stop-color="rgb(133,193,200)" stop-opacity="0.23"/><stop offset="0.062" stop-color="rgb(133,193,200)" stop-opacity="0.23"/><stop offset="0.125" stop-color="rgb(133,193,200)" stop-opacity="0.22"/><stop offset="0.188" stop-color="rgb(133,193,200)" stop-opacity="0.22"/><stop offset="0.250" stop-color="rgb(133,193,200)" stop-opacity="0.20"/><stop offset="0.312" stop-color="rgb(133,193,200)" stop-opacity="0.19"/><stop offset="0.375" stop-color="rgb(133,193,200)" stop-opacity="0.17"/><stop offset="0.438" stop-color="rgb(133,193,200)" stop-opacity="0.15"/><stop offset="0.500" stop-color="rgb(133,193,200)" stop-opacity="0.13"/><stop offset="0.562" stop-color="rgb(133,193,200)" stop-opacity="0.11"/><stop offset="0.625" stop-color="rgb(133,193,200)" stop-opacity="0.09"/><stop offset="0.688" stop-color="rgb(133,193,200)" stop-opacity="0.06"/><stop offset="0.750" stop-color="rgb(133,193,200)" stop-opacity="0.04"/><stop offset="0.812" stop-color="rgb(133,193,200)" stop-opacity="0.03"/><stop offset="0.875" stop-color="rgb(133,193,200)" stop-opacity="0.01"/><stop offset="0.938" stop-color="rgb(133,193,200)" stop-opacity="0.00"/><stop offset="1.000" stop-color="rgb(133,193,200)" stop-opacity="0.00"/></radialGradient>
<radialGradient id="h24"><stop offset="0.000" stop-color="rgb(152,141,154)" stop-opacity="0.66"/><stop offset="0.062" stop-color="rgb(151,142,155)" stop-opacity="0.66"/><stop offset="0.125" stop-color="rgb(151,144,158)" stop-opacity="0.66"/><stop offset="0.188" stop-color="rgb(149,147,164)" stop-opacity="0.66"/><stop offset="0.250" stop-color="rgb(148,151,172)" stop-opacity="0.66"/><stop offset="0.312" stop-color="rgb(146,157,182)" stop-opacity="0.66"/><stop offset="0.375" stop-color="rgb(143,163,191)" stop-opacity="0.66"/><stop offset="0.438" stop-color="rgb(141,170,193)" stop-opacity="0.66"/><stop offset="0.500" stop-color="rgb(138,178,195)" stop-opacity="0.66"/><stop offset="0.562" stop-color="rgb(135,186,198)" stop-opacity="0.66"/><stop offset="0.625" stop-color="rgb(133,193,200)" stop-opacity="0.64"/><stop offset="0.688" stop-color="rgb(133,193,200)" stop-opacity="0.48"/><stop offset="0.750" stop-color="rgb(133,193,200)" stop-opacity="0.33"/><stop offset="0.812" stop-color="rgb(133,193,200)" stop-opacity="0.20"/><stop offset="0.875" stop-color="rgb(133,193,200)" stop-opacity="0.10"/><stop offset="0.938" stop-color="rgb(133,193,200)" stop-opacity="0.03"/><stop offset="1.000" stop-color="rgb(133,193,200)" stop-opacity="0.00"/></radialGradient>
<radialGradient id="h25"><stop offset="0.000" stop-color="rgb(133,193,200)" stop-opacity="0.27"/><stop offset="0.062" stop-color="rgb(133,193,200)" stop-opacity="0.27"/><stop offset="0.125" stop-color="rgb(133,193,200)" stop-opacity="0.26"/><stop offset="0.188" stop-color="rgb(133,193,200)" stop-opacity="0.25"/><stop offset="0.250" stop-color="rgb(133,193,200)" stop-opacity="0.24"/><stop offset="0.312" stop-color="rgb(133,193,200)" stop-opacity="0.22"/><stop offset="0.375" stop-color="rgb(133,193,200)" stop-opacity="0.20"/><stop offset="0.438" stop-color="rgb(133,193,200)" stop-opacity="0.18"/><stop offset="0.500" stop-color="rgb(133,193,200)" stop-opacity="0.15"/><stop offset="0.562" stop-color="rgb(133,193,200)" stop-opacity="0.13"/><stop offset="0.625" stop-color="rgb(133,193,200)" stop-opacity="0.10"/><stop offset="0.688" stop-color="rgb(133,193,200)" stop-opacity="0.08"/><stop offset="0.750" stop-color="rgb(133,193,200)" stop-opacity="0.05"/><stop offset="0.812" stop-color="rgb(133,193,200)" stop-opacity="0.03"/><stop offset="0.875" stop-color="rgb(133,193,200)" stop-opacity="0.01"/><stop offset="0.938" stop-color="rgb(133,193,200)" stop-opacity="0.00"/><stop offset="1.000" stop-color="rgb(133,193,200)" stop-opacity="0.00"/></radialGradient>
<radialGradient id="h26"><stop offset="0.000" stop-color="rgb(255,255,0)" stop-opacity="0.80"/><stop offset="0.062" stop-color="rgb(255,255,0)" stop-opacity="0.80"/><stop offset="0.125" stop-color="rgb(253,244,0)" stop-opacity="0.80"/><stop offset="0.188" stop-color="rgb(248,222,0)" stop-opacity="0.80"/><stop offset="0.250" stop-color="rgb(243,200,0)" stop-opacity="0.80"/><stop offset="0.312" stop-color="rgb(237,172,0)" stop-opacity="0.80"/><stop offset="0.375" stop-color="rgb(230,139,0)" stop-opacity="0.80"/><stop offset="0.438" stop-color="rgb(223,106,0)" stop-opacity="0.80"/><stop offset="0.500" stop-color="rgb(214,67,0)" stop-opacity="0.80"/><stop offset="0.562" stop-color="rgb(205,23,0)" stop-opacity="0.80"/><stop offset="0.625" stop-color="rgb(197,10,17)" stop-opacity="0.79"/><stop offset="0.688" stop-color="rgb(188,36,64)" stop-opacity="0.69"/><stop offset="0.750" stop-color="rgb(177,68,119)" stop-opacity="0.58"/><stop offset="0.812" stop-color="rgb(166,100,166)" stop-opacity="0.46"/><stop offset="0.875" stop-color="rgb(151,142,155)" stop-opacity="0.35"/><stop offset="0.938" stop-color="rgb(136,183,197)" stop-opacity="0.23"/><stop offset="1.000" stop-color="rgb(133,193,200)" stop-opacity="0.00"/></radialGradient>
<radialGradient id="h27"><stop offset="0.000" stop-color="rgb(255,255,0)" stop-opacity="0.80"/><stop offset="0.062" stop-color="rgb(255,255,0)" stop-opacity="0.80"/><stop offset="0.125" stop-color="rgb(253,244,0)" stop-opacity="0.80"/><stop offset="0.188" stop-color="rgb(248,222,0)" stop-opacity="0.80"/><stop offset="0.250" stop-color="rgb(243,200,0)" stop-opacity="0.80"/><stop offset="0.312" stop-color="rgb(237,172,0)" stop-opacity="0.80"/><stop offset="0.375" stop-color="rgb(230,139,0)" stop-opacity="0.80"/><stop offset="0.438" stop-color="rgb(223,106,0)" stop-opacity="0.80"/><stop offset="0.500" stop-color="rgb(214,67,0)" stop-opacity="0.80"/><stop offset="0.562" stop-color="rgb(205,23,0)" stop-opacity="0.80"/><stop offset="0.625" stop-color="rgb(197,10,17)" stop-opacity="0.79"/><stop offset="0.688" stop-color="rgb(188,36,64)" stop-opacity="0.69"/><stop offset="0.750" stop-color="rgb(177,68,119)" stop-opacity="0.58"/><stop offset="0.812" stop-color="rgb(166,100,166)" stop-opacity="0.46"/><stop offset="0.875" stop-color="rgb(151,142,155)" stop-opacity="0.35"/><stop offset="0.938" stop-color="rgb(136,183,197)" stop-opacity="0.23"/><stop offset="1.000" stop-color="rgb(133,193,200)" stop-opacity="0.00"/></radialGradient>
<radialGradient id="h28"><stop offset="0.000" stop-color="rgb(180,60,105)" stop-opacity="0.74"/><stop offset="0.062" stop-color="rgb(179,61,107)" stop-opacity="0.74"/><stop offset="0.125" stop-color="rgb(178,64,112)" stop-opacity="0.74"/><stop offset="0.188" stop-color="rgb(176,69,122)" stop-opacity="0.74"/><stop offset="0.250" stop-color="rgb(174,76,134)" stop-opacity="0.74"/><stop offset="0.312" stop-color="rgb(171,85,149)" stop-opacity="0.74"/><stop offset="0.375" stop-color="rgb(168,95,166)" stop-opacity="0.74"/><stop offset="0.438" stop-color="rgb(163,109,155)" stop-opacity="0.74"/><stop offset="0.500" stop-color="rgb(157,125,136)" stop-opacity="0.74"/><stop offset="0.562" stop-color="rgb(151,142,156)" stop-opacity="0.74"/><stop offset="0.625" stop-color="rgb(145,159,187)" stop-opacity="0.74"/><stop offset="0.688" stop-color="rgb(139,176,195)" stop-opacity="0.74"/><stop offset="0.750" stop-color="rgb(134,191,199)" stop-opacity="0.74"/><stop offset="0.812" stop-color="rgb(133,193,200)" stop-opacity="0.47"/><stop offset="0.875" stop-color="rgb(133,193,200)" stop-opacity="0.22"/><stop offset="0.938" stop-color="rgb(133,193,200)" stop-opacity="0.06"/><stop offset="1.000" stop-color="rgb(133,193,200)" stop-opacity="0.00"/></radialGradient>
<radialGradient id="h29"><stop offset="0.000" stop-color="rgb(150,145,161)" stop-opacity="0.66"/><stop offset="0.062" stop-color="rgb(150,145,162)" stop-opacity="0.66"/><stop offset="0.125" stop-color="rgb(149,147,165)" stop-opacity="0.66"/><stop offset="0.188" stop-color="rgb(148,150,171)" stop-opacity="0.66"/><stop offset="0.250" stop-color="rgb(146,155,178)" stop-opacity="0.66"/><stop offset="0.312" stop-color="rgb(144,160,188)" stop-opacity="0.66"/><stop offset="0.375" stop-color="rgb(142,166,191)" stop-opacity="0.66"/><stop offset="0.438" stop-color="rgb(140,173,194)" stop-opacity="0.66"/><stop offset="0.500" stop-color="rgb(138,180,196)" stop-opacity="0.66"/><stop offset="0.562" stop-color="rgb(135,188,198)" stop-opacity="0.66"/><stop offset="0.625" stop-color="rgb(133,193,200)" stop-opacity="0.61"/><stop offset="0.688" stop-color="rgb(133,193,200)" stop-opacity="0.46"/><stop offset="0.750" stop-color="rgb(133,193,200)" stop-opacity="0.32"/><stop offset="0.812" stop-color="rgb(133,193,200)" stop-opacity="0.19"/><stop offset="0.875" stop-color="rgb(133,193,200)" stop-opacity="0.09"/><stop offset="0.938" stop-color="rgb(133,193,200)" stop-opacity="0.02"/><stop offset="1.000" stop-color="rgb(133,193,200)" stop-opacity="0.00"/></radialGradient>
<radialGradient id="h30"><stop offset="0.000" stop-color="rgb(154,133,140)" stop-opacity="0.66"/><stop offset="0.062" stop-color="rgb(154,134,141)" stop-opacity="0.66"/><stop offset="0.125" stop-color="rgb(153,136,145)" stop-opacity="0.66"/><stop offset="0.188" stop-color="rgb(152,140,151)" stop-opacity="0.66"/><stop offset="0.250" stop-color="rgb(150,144,160)" stop-opacity="0.66"/><stop offset="0.312" stop-color="rgb(148,150,171)" stop-opacity="0.66"/><stop offset="0.375" stop-color="rgb(145,157,183)" stop-opacity="0.66"/><stop offset="0.438" stop-color="rgb(143,165,191)" stop-opacity="0.66"/><stop offset="0.500" stop-color="rgb(140,173,194)" stop-opacity="0.66"/><stop offset="0.562" stop-color="rgb(137,182,197)" stop-opacity="0.66"/><stop offset="0.625" stop-color="rgb(134,191,199)" stop-opacity="0.66"/><stop offset="0.688" stop-color="rgb(133,193,200)" stop-opacity="0.53"/><stop offset="0.750" stop-color="rgb(133,193,200)" stop-opacity="0.36"/><stop offset="0.812" stop-color="rgb(133,193,200)" stop-opacity="0.22"/><stop offset="0.875" stop-color="rgb(133,193,200)" stop-opacity="0.10"/><stop offset="0.938" stop-color="rgb(133,193,200)" stop-opacity="0.03"/><stop offset="1.000" stop-color="rgb(133,193,200)" stop-opacity="0.00"/></radialGradient>
<radialGradient id="h31"><stop offset="0.000" stop-color="rgb(133,193,200)" stop-opacity="0.53"/><stop offset="0.062" stop-color="rgb(133,193,200)" stop-opacity="0.53"/><stop offset="0.125" stop-color="rgb(133,193,200)" stop-opacity="0.51"/><stop offset="0.188" stop-color="rgb(133,193,200)" stop-opacity="0.49"/><stop offset="0.250" stop-color="rgb(133,193,200)" stop-opacity="0.47"/><stop offset="0.312" stop-color="rgb(133,193,200)" stop-opacity="0.43"/><stop offset="0.375" stop-color="rgb(133,193,200)" stop-opacity="0.39"/><stop offset="0.438" stop-color="rgb(133,193,200)" stop-opacity="0.35"/><stop offset="0.500" stop-color="rgb(133,193,200)" stop-opacity="0.30"/><stop offset="0.562" stop-color="rgb(133,193,200)" stop-opacity="0.25"/><stop offset="0.625" stop-color="rgb(133,193,200)" stop-opacity="0.20"/><stop offset="0.688" stop-color="rgb(133,193,200)" stop-opacity="0.15"/><stop offset="0.750" stop-color="rgb(133,193,200)" stop-opacity="0.10"/><stop offset="0.812" stop-color="rgb(133,193,200)" stop-opacity="0.06"/><stop offset="0.875" stop-color="rgb(133,193,200)" stop-opacity="0.03"/><stop offset="0.938" stop-color="rgb(133,193,200)" stop-opacity="0.01"/><stop offset="1.000" stop-color="rgb(133,193,200)" stop-opacity="0.00"/></radialGradient>
<radialGradient id="h32"><stop offset="0.000" stop-color="rgb(159,121,142)" stop-opacity="0.74"/><stop offset="0.062" stop-color="rgb(158,122,141)" stop-opacity="0.74"/><stop offset="0.125" stop-color="rgb(158,124,138)" stop-opacity="0.74"/><stop offset="0.188" stop-color="rgb(156,128,133)" stop-opacity="0.74"/><stop offset="0.250" stop-color="rgb(154,134,140)" stop-opacity="0.74"/><stop offset="0.312" stop-color="rgb(152,140,153)" stop-opacity="0.74"/><stop offset="0.375" stop-color="rgb(149,148,167)" stop-opacity="0.74"/><stop offset="0.438" stop-color="rgb(145,157,183)" stop-opacity="0.74"/><stop offset="0.500" stop-color="rgb(142,166,192)" stop-opacity="0.74"/><stop offset="0.562" stop-color="rgb(139,176,195)" stop-opacity="0.74"/><stop offset="0.625" stop-color="rgb(135,186,198)" stop-opacity="0.74"/><stop offset="0.688" stop-color="rgb(133,193,200)" stop-opacity="0.67"/><stop offset="0.750" stop-color="rgb(133,193,200)" stop-opacity="0.46"/><stop offset="0.812" stop-color="rgb(133,193,200)" stop-opacity="0.28"/><stop offset="0.875" stop-color="rgb(133,193,200)" stop-opacity="0.13"/><stop offset="0.938" stop-color="rgb(133,193,200)" stop-opacity="0.04"/><stop offset="1.000" stop-color="rgb(133,193,200)" stop-opacity="0.00"/></radialGradient>
<radialGradient id="h33"><stop offset="0.000" stop-color="rgb(133,193,200)" stop-opacity="0.53"/><stop offset="0.062" stop-color="rgb(133,193,200)" stop-opacity="0.53"/><stop offset="0.125" stop-color="rgb(133,193,200)" stop-opacity="0.51"/><stop offset="0.188" stop-color="rgb(133,193,200)" stop-opacity="0.49"/><stop offset="0.250" stop-color="rgb(133,193,200)" stop-opacity="0.47"/><stop offset="0.312" stop-color="rgb(133,193,200)" stop-opacity="0.43"/><stop offset="0.375" stop-color="rgb(133,193,200)" stop-opacity="0.39"/><stop offset="0.438" stop-color="rgb(133,193,200)" stop-opacity="0.35"/><stop offset="0.500" stop-color="rgb(133,193,200)" stop-opacity="0.30"/><stop offset="0.562" stop-color="rgb(133,193,200)" stop-opacity="0.25"/><stop offset="0.625" stop-color="rgb(133,193,200)" stop-opacity="0.20"/><stop offset="0.688" stop-color="rgb(133,193,200)" stop-opacity="0.15"/><stop offset="0.750" stop-color="rgb(133,193,200)" stop-opacity="0.10"/><stop offset="0.812" stop-color="rgb(133,193,200)" stop-opacity="0.06"/><stop offset="0.875" stop-color="rgb(133,193,200)" stop-opacity="0.03"/><stop offset="0.938" stop-color="rgb(133,193,200)" stop-opacity="0.01"/><stop offset="1.000" stop-color="rgb(133,193,200)" stop-opacity="0.00"/></radialGradient>
<radialGradient id="h34"><stop offset="0.000" stop-color="rgb(150,145,161)" stop-opacity="0.66"/><stop offset="0.062" stop-color="rgb(150,145,162)" stop-opacity="0.66"/><stop offset="0.125" stop-color="rgb(149,147,165)" stop-opacity="0.66"/><stop offset="0.188" stop-color="rgb(148,150,171)" stop-opacity="0.66"/><stop offset="0.250" stop-color="rgb(146,155,178)" stop-opacity="0.66"/><stop offset="0.312" stop-color="rgb(144,160,188)" stop-opacity="0.66"/><stop offset="0.375" stop-color="rgb(142,166,191)" stop-opacity="0.66"/><stop offset="0.438" stop-color="rgb(140,173,194)" stop-opacity="0.66"/><stop offset="0.500" stop-color="rgb(138,180,196)" stop-opacity="0.66"/><stop offset="0.562" stop-color="rgb(135,188,198)" stop-opacity="0.66"/><stop offset="0.625" stop-color="rgb(133,193,200)" stop-opacity="0.61"/><stop offset="0.688" stop-color="rgb(133,193,200)" stop-opacity="0.46"/><stop offset="0.750" stop-color="rgb(133,193,200)" stop-opacity="0.32"/><stop offset="0.812" stop-color="rgb(133,193,200)" stop-opacity="0.19"/><stop offset="0.875" stop-color="rgb(133,193,200)" stop-opacity="0.09"/><stop offset="0.938" stop-color="rgb(133,193,200)" stop-opacity="0.02"/><stop offset="1.000" stop-color="rgb(133,193,200)" stop-opacity="0.00"/></radialGradient>
<radialGradient id="h35"><stop offset="0.000" stop-color="rgb(137,183,197)" stop-opacity="0.66"/><stop offset="0.062" stop-color="rgb(136,183,197)" stop-opacity="0.66"/><stop offset="0.125" stop-color="rgb(136,184,197)" stop-opacity="0.66"/><stop offset="0.188" stop-color="rgb(136,185,198)" stop-opacity="0.66"/><stop offset="0.250" stop-color="rgb(135,188,198)" stop-opacity="0.66"/><stop offset="0.312" stop-color="rgb(134,190,199)" stop-opacity="0.66"/><stop offset="0.375" stop-color="rgb(133,193,200)" stop-opacity="0.65"/><stop offset="0.438" stop-color="rgb(133,193,200)" stop-opacity="0.57"/><stop offset="0.500" stop-color="rgb(133,193,200)" stop-opacity="0.49"/><stop offset="0.562" stop-color="rgb(133,193,200)" stop-opacity="0.41"/><stop offset="0.625" stop-color="rgb(133,193,200)" stop-opacity="0.33"/><stop offset="0.688" stop-color="rgb(133,193,200)" stop-opacity="0.24"/><stop offset="0.750" stop-color="rgb(133,193,200)" stop-opacity="0.17"/><stop offset="0.812" stop-color="rgb(133,193,200)" stop-opacity="0.10"/><stop offset="0.875" stop-color="rgb(133,193,200)" stop-opacity="0.05"/><stop offset="0.938" stop-color="rgb(133,193,200)" stop-opacity="0.01"/><stop offset="1.000" stop-color="rgb(133,193,200)" stop-opacity="0.00"/></radialGradient>
<radialGradient id="h36"><stop offset="0.000" stop-color="rgb(133,193,200)" stop-opacity="0.27"/><stop offset="0.062" stop-color="rgb(133,193,200)" stop-opacity="0.27"/><stop offset="0.125" stop-color="rgb(133,193,200)" stop-opacity="0.26"/><stop offset="0.188" stop-color="rgb(133,193,200)" stop-opacity="0.25"/><stop offset="0.250" stop-color="rgb(133,193,200)" stop-opacity="0.24"/><stop offset="0.312" stop-color="rgb(133,193,200)" stop-opacity="0.22"/><stop offset="0.375" stop-color="rgb(133,193,200)" stop-opacity="0.20"/><stop offset="0.438" stop-color="rgb(133,193,200)" stop-opacity="0.18"/><stop offset="0.500" stop-color="rgb(133,193,200)" stop-opacity="0.15"/><stop offset="0.562" stop-color="rgb(133,193,200)" stop-opacity="0.13"/><stop offset="0.625" stop-color="rgb(133,193,200)" stop-opacity="0.10"/><stop offset="0.688" stop-color="rgb(133,193,200)" stop-opacity="0.08"/><stop offset="0.750" stop-color="rgb(133,193,200)" stop-opacity="0.05"/><stop offset="0.812" stop-color="rgb(133,193,200)" stop-opacity="0.03"/><stop offset="0.875" stop-color="rgb(133,193,200)" stop-opacity="0.01"/><stop offset="0.938" stop-color="rgb(133,193,200)" stop-opacity="0.00"/><stop offset="1.000" stop-color="rgb(133,193,200)" stop-opacity="0.00"/></radialGradient>
<radialGradient id="h37"><stop offset="0.000" stop-color="rgb(133,193,200)" stop-opacity="0.27"/><stop offset="0.062" stop-color="rgb(133,193,200)" stop-opacity="0.27"/><stop offset="0.125" stop-color="rgb(133,193,200)" stop-opacity="0.26"/><stop offset="0.188" stop-color="rgb(133,193,200)" stop-opacity="0.25"/><stop offset="0.250" stop-color="rgb(133,193,200)" stop-opacity="0.24"/><stop offset="0.312" stop-color="rgb(133,193,200)" stop-opacity="0.22"/><stop offset="0.375" stop-color="rgb(133,193,200)" stop-opacity="0.20"/><stop offset="0.438" stop-color="rgb(133,193,200)" stop-opacity="0.18"/><stop offset="0.500" stop-color="rgb(133,193,200)" stop-opacity="0.15"/><stop offset="0.562" stop-color="rgb(133,193,200)" stop-opacity="0.13"/><stop offset="0.625" stop-color="rgb(133,193,200)" stop-opacity="0.10"/><stop offset="0.688" stop-color="rgb(133,193,200)" stop-opacity="0.08"/><stop offset="0.750" stop-color="rgb(133,193,200)" stop-opacity="0.05"/><stop offset="0.812" stop-color="rgb(133,193,200)" stop-opacity="0.03"/><stop offset="0.875" stop-color="rgb(133,193,200)" stop-opacity="0.01"/><stop offset="0.938" stop-color="rgb(133,193,200)" stop-opacity="0.00"/><stop offset="1.000" stop-color="rgb(133,193,200)" stop-opacity="0.00"/></radialGradient>
<radialGradient id="h38"><stop offset="0.000" stop-color="rgb(133,193,200)" stop-opacity="0.27"/><stop offset="0.062" stop-color="rgb(133,193,200)" stop-opacity="0.27"/><stop offset="0.125" stop-color="rgb(133,193,200)" stop-opacity="0.26"/><stop offset="0.188" stop-color="rgb(133,193,200)" stop-opacity="0.25"/><stop offset="0.250" stop-color="rgb(133,193,200)" stop-opacity="0.24"/><stop offset="0.312" stop-color="rgb(133,193,200)" stop-opacity="0.22"/><stop offset="0.375" stop-color="rgb(133,193,200)" stop-opacity="0.20"/><stop offset="0.438" stop-color="rgb(133,193,200)" stop-opacity="0.18"/><stop offset="0.500" stop-color="rgb(133,193,200)" stop-opacity="0.15"/><stop offset="0.562" stop-color="rgb(133,193,200)" stop-opacity="0.13"/><stop offset="0.625" stop-color="rgb(133,193,200)" stop-opacity="0.10"/><stop offset="0.688" stop-color="rgb(133,193,200)" stop-opacity="0.08"/><stop offset="0.750" stop-color="rgb(133,193,200)" stop-opacity="0.05"/><stop offset="0.812" stop-color="rgb(133,193,200)" stop-opacity="0.03"/><stop offset="0.875" stop-color="rgb(133,193,200)" stop-opacity="0.01"/><stop offset="0.938" stop-color="rgb(133,193,200)" stop-opacity="0.00"/><stop offset="1.000" stop-color="rgb(133,193,200)" stop-opacity="0.00"/></radialGradient>
<radialGradient id="h39"><stop offset="0.000" stop-color="rgb(133,193,200)" stop-opacity="0.27"/><stop offset="0.062" stop-color="rgb(133,193,200)" stop-opacity="0.27"/><stop offset="0.125" stop-color="rgb(133,193,200)" stop-opacity="0.26"/><stop offset="0.188" stop-color="rgb(133,193,200)" stop-opacity="0.25"/><stop offset="0.250" stop-color="rgb(133,193,200)" stop-opacity="0.24"/><stop offset="0.312" stop-color="rgb(133,193,200)" stop-opacity="0.22"/><stop offset="0.375" stop-color="rgb(133,193,200)" stop-opacity="0.20"/><stop offset="0.438" stop-color="rgb(133,193,200)" stop-opacity="0.18"/><stop offset="0.500" stop-color="rgb(133,193,200)" stop-opacity="0.15"/><stop offset="0.562" stop-color="rgb(133,193,200)" stop-opacity="0.13"/><stop offset="0.625" stop-color="rgb(133,193,200)" stop-opacity="0.10"/><stop offset="0.688" stop-color="rgb(133,193,200)" stop-opacity="0.08"/><stop offset="0.750" stop-color="rgb(133,193,200)" stop-opacity="0.05"/><stop offset="0.812" stop-color="rgb(133,193,200)" stop-opacity="0.03"/><stop offset="0.875" stop-color="rgb(133,193,200)" stop-opacity="0.01"/><stop offset="0.938" stop-color="rgb(133,193,200)" stop-opacity="0.00"/><stop offset="1.000" stop-color="rgb(133,193,200)" stop-opacity="0.00"/></radialGradient>
<radialGradient id="h40"><stop offset="0.000" stop-color="rgb(133,193,200)" stop-opacity="0.23"/><stop offset="0.062" stop-color="rgb(133,193,200)" stop-opacity="0.23"/><stop offset="0.125" stop-color="rgb(133,193,200)" stop-opacity="0.22"/><stop offset="0.188" stop-color="rgb(133,193,200)" stop-opacity="0.22"/><stop offset="0.250" stop-color="rgb(133,193,200)" stop-opacity="0.20"/><stop offset="0.312" stop-color="rgb(133,193,200)" stop-opacity="0.19"/><stop offset="0.375" stop-color="rgb(133,193,200)" stop-opacity="0.17"/><stop offset="0.438" stop-color="rgb(133,193,200)" stop-opacity="0.15"/><stop offset="0.500" stop-color="rgb(133,193,200)" stop-opacity="0.13"/><stop offset="0.562" stop-color="rgb(133,193,200)" stop-opacity="0.11"/><stop offset="0.625" stop-color="rgb(133,193,200)" stop-opacity="0.09"/><stop offset="0.688" stop-color="rgb(133,193,200)" stop-opacity="0.06"/><stop offset="0.750" stop-color="rgb(133,193,200)" stop-opacity="0.04"/><stop offset="0.812" stop-color="rgb(133,193,200)" stop-opacity="0.03"/><stop offset="0.875" stop-color="rgb(133,193,200)" stop-opacity="0.01"/><stop offset="0.938" stop-color="rgb(133,193,200)" stop-opacity="0.00"/><stop offset="1.000" stop-color="rgb(133,193,200)" stop-opacity="0.00"/></radialGradient>
<radialGradient id="h41"><stop offset="0.000" stop-color="rgb(133,193,200)" stop-opacity="0.23"/><stop offset="0.062" stop-color="rgb(133,193,200)" stop-opacity="0.23"/><stop offset="0.125" stop-color="rgb(133,193,200)" stop-opacity="0.22"/><stop offset="0.188" stop-color="rgb(133,193,200)" stop-opacity="0.22"/><stop offset="0.250" stop-color="rgb(133,193,200)" stop-opacity="0.20"/><stop offset="0.312" stop-color="rgb(133,193,200)" stop-opacity="0.19"/><stop offset="0.375" stop-color="rgb(133,193,200)" stop-opacity="0.17"/><stop offset="0.438" stop-color="rgb(133,193,200)" stop-opacity="0.15"/><stop offset="0.500" stop-color="rgb(133,193,200)" stop-opacity="0.13"/><stop offset="0.562" stop-color="rgb(133,193,200)" stop-opacity="0.11"/><stop offset="0.625" stop-color="rgb(133,193,200)" stop-opacity="0.09"/><stop offset="0.688" stop-color="rgb(133,193,200)" stop-opacity="0.06"/><stop offset="0.750" stop-color="rgb(133,193,200)" stop-opacity="0.04"/><stop offset="0.812" stop-color="rgb(133,193,200)" stop-opacity="0.03"/><stop offset="0.875" stop-color="rgb(133,193,200)" stop-opacity="0.01"/><stop offset="0.938" stop-color="rgb(133,193,200)" stop-opacity="0.00"/><stop offset="1.000" stop-color="rgb(133,193,200)" stop-opacity="0.00"/></radialGradient>
<radialGradient id="h42"><stop offset="0.000" stop-color="rgb(133,193,200)" stop-opacity="0.23"/><stop offset="0.062" stop-color="rgb(133,193,200)" stop-opacity="0.23"/><stop offset="0.125" stop-color="rgb(133,193,200)" stop-opacity="0.22"/><stop offset="0.188" stop-color="rgb(133,193,200)" stop-opacity="0.22"/><stop offset="0.250" stop-color="rgb(133,193,200)" stop-opacity="0.20"/><stop offset="0.312" stop-color="rgb(133,193,200)" stop-opacity="0.19"/><stop offset="0.375" stop-color="rgb(133,193,200)" stop-opacity="0.17"/><stop offset="0.438" stop-color="rgb(133,193,200)" stop-opacity="0.15"/><stop offset="0.500" stop-color="rgb(133,193,200)" stop-opacity="0.13"/><stop offset="0.562" stop-color="rgb(133,193,200)" stop-opacity="0.11"/><stop offset="0.625" stop-color="rgb(133,193,200)" stop-opacity="0.09"/><stop offset="0.688" stop-color="rgb(133,193,200)" stop-opacity="0.06"/><stop offset="0.750" stop-color="rgb(133,193,200)" stop-opacity="0.04"/><stop offset="0.812" stop-color="rgb(133,193,200)" stop-opacity="0.03"/><stop offset="0.875" stop-color="rgb(133,193,200)" stop-opacity="0.01"/><stop offset="0.938" stop-color="rgb(133,193,200)" stop-opacity="0.00"/><stop offset="1.000" stop-color="rgb(133,193,200)" stop-opacity="0.00"/></radialGradient>
<radialGradient id="h43"><stop offset="0.000" stop-color="rgb(133,193,200)" stop-opacity="0.23"/><stop offset="0.062" stop-color="rgb(133,193,200)" stop-opacity="0.23"/><stop offset="0.125" stop-color="rgb(133,193,200)" stop-opacity="0.22"/><stop offset="0.188" stop-color="rgb(133,193,200)" stop-opacity="0.22"/><stop offset="0.250" stop-color="rgb(133,193,200)" stop-opacity="0.20"/><stop offset="0.312" stop-color="rgb(133,193,200)" stop-opacity="0.19"/><stop offset="0.375" stop-color="rgb(133,193,200)" stop-opacity="0.17"/><stop offset="0.438" stop-color="rgb(133,193,200)" stop-opacity="0.15"/><stop offset="0.500" stop-color="rgb(133,193,200)" stop-opacity="0.13"/><stop offset="0.562" stop-color="rgb(133,193,200)" stop-opacity="0.11"/><stop offset="0.625" stop-color="rgb(133,193,200)" stop-opacity="0.09"/><stop offset="0.688" stop-color="rgb(133,193,200)" stop-opacity="0.06"/><stop offset="0.750" stop-color="rgb(133,193,200)" stop-opacity="0.04"/><stop offset="0.812" stop-color="rgb(133,193,200)" stop-opacity="0.03"/><stop offset="0.875" stop-color="rgb(133,193,200)" stop-opacity="0.01"/><stop offset="0.938" stop-color="rgb(133,193,200)" stop-opacity="0.00"/><stop offset="1.000" stop-color="rgb(133,193,200)" stop-opacity="0.00"/></radialGradient>
<radialGradient id="h44"><stop offset="0.000" stop-color="rgb(192,24,42)" stop-opacity="0.74"/><stop offset="0.062" stop-color="rgb(191,26,45)" stop-opacity="0.74"/><stop offset="0.125" stop-color="rgb(190,29,52)" stop-opacity="0.74"/><stop offset="0.188" stop-color="rgb(188,36,63)" stop-opacity="0.74"/><stop offset="0.250" stop-color="rgb(185,45,79)" stop-opacity="0.74"/><stop offset="0.312" stop-color="rgb(181,56,98)" stop-opacity="0.74"/><stop offset="0.375" stop-color="rgb(176,69,121)" stop-opacity="0.74"/><stop offset="0.438" stop-color="rgb(172,83,146)" stop-opacity="0.74"/><stop offset="0.500" stop-color="rgb(166,99,167)" stop-opacity="0.74"/><stop offset="0.562" stop-color="rgb(159,120,142)" stop-opacity="0.74"/><stop offset="0.625" stop-color="rgb(151,142,155)" stop-opacity="0.74"/><stop offset="0.688" stop-color="rgb(143,163,191)" stop-opacity="0.74"/><stop offset="0.750" stop-color="rgb(137,182,197)" stop-opacity="0.74"/><stop offset="0.812" stop-color="rgb(133,193,200)" stop-opacity="0.60"/><stop offset="0.875" stop-color="rgb(133,193,200)" stop-opacity="0.28"/><stop offset="0.938" stop-color="rgb(133,193,200)" stop-opacity="0.08"/><stop offset="1.000" stop-color="rgb(133,193,200)" stop-opacity="0.00"/></radialGradient>
<radialGradient id="h45"><stop offset="0.000" stop-color="rgb(133,193,200)" stop-opacity="0.27"/><stop offset="0.062" stop-color="rgb(133,193,200)" stop-opacity="0.27"/><stop offset="0.125" stop-color="rgb(133,193,200)" stop-opacity="0.26"/><stop offset="0.188" stop-color="rgb(133,193,200)" stop-opacity="0.25"/><stop offset="0.250" stop-color="rgb(133,193,200)" stop-opacity="0.24"/><stop offset="0.312" stop-color="rgb(133,193,200)" stop-opacity="0.22"/><stop offset="0.375" stop-color="rgb(133,193,200)" stop-opacity="0.20"/><stop offset="0.438" stop-color="rgb(133,193,200)" stop-opacity="0.18"/><stop offset="0.500" stop-color="rgb(133,193,200)" stop-opacity="0.15"/><stop offset="0.562" stop-color="rgb(133,193,200)" stop-opacity="0.13"/><stop offset="0.625" stop-color="rgb(133,193,200)" stop-opacity="0.10"/><stop offset="0.688" stop-color="rgb(133,193,200)" stop-opacity="0.08"/><stop offset="0.750" stop-color="rgb(133,193,200)" stop-opacity="0.05"/><stop offset="0.812" stop-color="rgb(133,193,200)" stop-opacity="0.03"/><stop offset="0.875" stop-color="rgb(133,193,200)" stop-opacity="0.01"/><stop offset="0.938" stop-color="rgb(133,193,200)" stop-opacity="0.00"/><stop offset="1.000" stop-color="rgb(133,193,200)" stop-opacity="0.00"/></radialGradient>
<radialGradient id="h46"><stop offset="0.000" stop-color="rgb(150,145,161)" stop-opacity="0.66"/><stop offset="0.062" stop-color="rgb(150,145,162)" stop-opacity="0.66"/><stop offset="0.125" stop-color="rgb(149,147,165)" stop-opacity="0.66"/><stop offset="0.188" stop-color="rgb(148,150,171)" stop-opacity="0.66"/><stop offset="0.250" stop-color="rgb(146,155,178)" stop-opacity="0.66"/><stop offset="0.312" stop-color="rgb(144,160,188)" stop-opacity="0.66"/><stop offset="0.375" stop-color="rgb(142,166,191)" stop-opacity="0.66"/><stop offset="0.438" stop-color="rgb(140,173,194)" stop-opacity="0.66"/><stop offset="0.500" stop-color="rgb(138,180,196)" stop-opacity="0.66"/><stop offset="0.562" stop-color="rgb(135,188,198)" stop-opacity="0.66"/><stop offset="0.625" stop-color="rgb(133,193,200)" stop-opacity="0.61"/><stop offset="0.688" stop-color="rgb(133,193,200)" stop-opacity="0.46"/><stop offset="0.750" stop-color="rgb(133,193,200)" stop-opacity="0.32"/><stop offset="0.812" stop-color="rgb(133,193,200)" stop-opacity="0.19"/><stop offset="0.875" stop-color="rgb(133,193,200)" stop-opacity="0.09"/><stop offset="0.938" stop-color="rgb(133,193,200)" stop-opacity="0.02"/><stop offset="1.000" stop-color="rgb(133,193,200)" stop-opacity="0.00"/></radialGradient>
<radialGradient id="h47"><stop offset="0.000" stop-color="rgb(149,149,168)" stop-opacity="0.66"/><stop offset="0.062" stop-color="rgb(148,149,169)" stop-opacity="0.66"/><stop offset="0.125" stop-color="rgb(148,151,172)" stop-opacity="0.66"/><stop offset="0.188" stop-color="rgb(147,154,177)" stop-opacity="0.66"/><stop offset="0.250" stop-color="rgb(145,158,184)" stop-opacity="0.66"/><stop offset="0.312" stop-color="rgb(143,163,191)" stop-opacity="0.66"/><stop offset="0.375" stop-color="rgb(141,169,192)" stop-opacity="0.66"/><stop offset="0.438" stop-color="rgb(139,175,194)" stop-opacity="0.66"/><stop offset="0.500" stop-color="rgb(137,182,197)" stop-opacity="0.66"/><stop offset="0.562" stop-color="rgb(134,189,199)" stop-opacity="0.66"/><stop offset="0.625" stop-color="rgb(133,193,200)" stop-opacity="0.58"/><stop offset="0.688" stop-color="rgb(133,193,200)" stop-opacity="0.44"/><stop offset="0.750" stop-color="rgb(133,193,200)" stop-opacity="0.30"/><stop offset="0.812" stop-color="rgb(133,193,200)" stop-opacity="0.18"/><stop offset="0.875" stop-color="rgb(133,193,200)" stop-opacity="0.09"/><stop offset="0.938" stop-color="rgb(133,193,200)" stop-opacity="0.02"/><stop offset="1.000" stop-color="rgb(133,193,200)" stop-opacity="0.00"/></radialGradient>
<radialGradient id="h48"><stop offset="0.000" stop-color="rgb(133,193,200)" stop-opacity="0.53"/><stop offset="0.062" stop-color="rgb(133,193,200)" stop-opacity="0.53"/><stop offset="0.125" stop-color="rgb(133,193,200)" stop-opacity="0.51"/><stop offset="0.188" stop-color="rgb(133,193,200)" stop-opacity="0.49"/><stop offset="0.250" stop-color="rgb(133,193,200)" stop-opacity="0.47"/><stop offset="0.312" stop-color="rgb(133,193,200)" stop-opacity="0.43"/><stop offset="0.375" stop-color="rgb(133,193,200)" stop-opacity="0.39"/><stop offset="0.438" stop-color="rgb(133,193,200)" stop-opacity="0.35"/><stop offset="0.500" stop-color="rgb(133,193,200)" stop-opacity="0.30"/><stop offset="0.562" stop-color="rgb(133,193,200)" stop-opacity="0.25"/><stop offset="0.625" stop-color="rgb(133,193,200)" stop-opacity="0.20"/><stop offset="0.688" stop-color="rgb(133,193,200)" stop-opacity="0.15"/><stop offset="0.750" stop-color="rgb(133,193,200)" stop-opacity="0.10"/><stop offset="0.812" stop-color="rgb(133,193,200)" stop-opacity="0.06"/><stop offset="0.875" stop-color="rgb(133,193,200)" stop-opacity="0.03"/><stop offset="0.938" stop-color="rgb(133,193,200)" stop-opacity="0.01"/><stop offset="1.000" stop-color="rgb(133,193,200)" stop-opacity="0.00"/></radialGradient>
<radialGradient id="h49"><stop offset="0.000" stop-color="rgb(153,137,147)" stop-opacity="0.66"/><stop offset="0.062" stop-color="rgb(153,138,148)" stop-opacity="0.66"/><stop offset="0.125" stop-color="rgb(152,140,152)" stop-opacity="0.66"/><stop offset="0.188" stop-color="rgb(151,143,158)" stop-opacity="0.66"/><stop offset="0.250" stop-color="rgb(149,148,166)" stop-opacity="0.66"/><stop offset="0.312" stop-color="rgb(147,153,176)" stop-opacity="0.66"/><stop offset="0.375" stop-color="rgb(144,160,188)" stop-opacity="0.66"/><stop offset="0.438" stop-color="rgb(142,168,192)" stop-opacity="0.66"/><stop offset="0.500" stop-color="rgb(139,176,195)" stop-opacity="0.66"/><stop offset="0.562" stop-color="rgb(136,184,197)" stop-opacity="0.66"/><stop offset="0.625" stop-color="rgb(133,192,200)" stop-opacity="0.66"/><stop offset="0.688" stop-color="rgb(133,193,200)" stop-opacity="0.50"/><stop offset="0.750" stop-color="rgb(133,193,200)" stop-opacity="0.35"/><stop offset="0.812" stop-color="rgb(133,193,200)" stop-opacity="0.21"/><stop offset="0.875" stop-color="rgb(133,193,200)" stop-opacity="0.10"/><stop offset="0.938" stop-color="rgb(133,193,200)" stop-opacity="0.03"/><stop offset="1.000" stop-color="rgb(133,193,200)" stop-opacity="0.00"/></radialGradient>
<radialGradient id="h50"><stop offset="0.000" stop-color="rgb(149,149,168)" stop-opacity="0.66"/><stop offset="0.062" stop-color="rgb(148,149,169)" stop-opacity="0.66"/><stop offset="0.125" stop-color="rgb(148,151,172)" stop-opacity="0.66"/><stop offset="0.188" stop-color="rgb(147,154,177)" stop-opacity="0.66"/><stop offset="0.250" stop-color="rgb(145,158,184)" stop-opacity="0.66"/><stop offset="0.312" stop-color="rgb(143,163,191)" stop-opacity="0.66"/><stop offset="0.375" stop-color="rgb(141,169,192)" stop-opacity="0.66"/><stop offset="0.438" stop-color="rgb(139,175,194)" stop-opacity="0.66"/><stop offset="0.500" stop-color="rgb(137,182,197)" stop-opacity="0.66"/><stop offset="0.562" stop-color="rgb(134,189,199)" stop-opacity="0.66"/><stop offset="0.625" stop-color="rgb(133,193,200)" stop-opacity="0.58"/><stop offset="0.688" stop-color="rgb(133,193,200)" stop-opacity="0.44"/><stop offset="0.750" stop-color="rgb(133,193,200)" stop-opacity="0.30"/><stop offset="0.812" stop-color="rgb(133,193,200)" stop-opacity="0.18"/><stop offset="0.875" stop-color="rgb(133,193,200)" stop-opacity="0.09"/><stop offset="0.938" stop-color="rgb(133,193,200)" stop-opacity="0.02"/><stop offset="1.000" stop-color="rgb(133,193,200)" stop-opacity="0.00"/></radialGradient>
<radialGradient id="h51"><stop offset="0.000" stop-color="rgb(133,193,200)" stop-opacity="0.53"/><stop offset="0.062" stop-color="rgb(133,193,200)" stop-opacity="0.53"/><stop offset="0.125" stop-color="rgb(133,193,200)" stop-opacity="0.51"/><stop offset="0.188" stop-color="rgb(133,193,200)" stop-opacity="0.49"/><stop offset="0.250" stop-color="rgb(133,193,200)" stop-opacity="0.47"/><stop offset="0.312" stop-color="rgb(133,193,200)" stop-opacity="0.43"/><stop offset="0.375" stop-color="rgb(133,193,200)" stop-opacity="0.39"/><stop offset="0.438" stop-color="rgb(133,193,200)" stop-opacity="0.35"/><stop offset="0.500" stop-color="rgb(133,193,200)" stop-opacity="0.30"/><stop offset="0.562" stop-color="rgb(133,193,200)" stop-opacity="0.25"/><stop offset="0.625" stop-color="rgb(133,193,200)" stop-opacity="0.20"/><stop offset="0.688" stop-color="rgb(133,193,200)" stop-opacity="0.15"/><stop offset="0.750" stop-color="rgb(133,193,200)" stop-opacity="0.10"/><stop offset="0.812" stop-color="rgb(133,193,200)" stop-opacity="0.06"/><stop offset="0.875" stop-color="rgb(133,193,200)" stop-opacity="0.03"/><stop offset="0.938" stop-color="rgb(133,193,200)" stop-opacity="0.01"/><stop offset="1.000" stop-color="rgb(133,193,200)" stop-opacity="0.00"/></radialGradient>
<radialGradient id="h52"><stop offset="0.000" stop-color="rgb(134,191,200)" stop-opacity="0.66"/><stop offset="0.062" stop-color="rgb(133,192,200)" stop-opacity="0.66"/><stop offset="0.125" stop-color="rgb(133,192,200)" stop-opacity="0.66"/><stop offset="0.188" stop-color="rgb(133,193,200)" stop-opacity="0.64"/><stop offset="0.250" stop-color="rgb(133,193,200)" stop-opacity="0.61"/><stop offset="0.312" stop-color="rgb(133,193,200)" stop-opacity="0.56"/><stop offset="0.375" stop-color="rgb(133,193,200)" stop-opacity="0.51"/><stop offset="0.438" stop-color="rgb(133,193,200)" stop-opacity="0.45"/><stop offset="0.500" stop-color="rgb(133,193,200)" stop-opacity="0.39"/><stop offset="0.562" stop-color="rgb(133,193,200)" stop-opacity="0.32"/><stop offset="0.625" stop-color="rgb(133,193,200)" stop-opacity="0.26"/><stop offset="0.688" stop-color="rgb(133,193,200)" stop-opacity="0.19"/><stop offset="0.750" stop-color="rgb(133,193,200)" stop-opacity="0.13"/><stop offset="0.812" stop-color="rgb(133,193,200)" stop-opacity="0.08"/><stop offset="0.875" stop-color="rgb(133,193,200)" stop-opacity="0.04"/><stop offset="0.938" stop-color="rgb(133,193,200)" stop-opacity="0.01"/><stop offset="1.000" stop-color="rgb(133,193,200)" stop-opacity="0.00"/></radialGradient>
<radialGradient id="h53"><stop offset="0.000" stop-color="rgb(149,149,168)" stop-opacity="0.66"/><stop offset="0.062" stop-color="rgb(148,149,169)" stop-opacity="0.66"/><stop offset="0.125" stop-color="rgb(148,151,172)" stop-opacity="0.66"/><stop offset="0.188" stop-color="rgb(147,154,177)" stop-opacity="0.66"/><stop offset="0.250" stop-color="rgb(145,158,184)" stop-opacity="0.66"/><stop offset="0.312" stop-color="rgb(143,163,191)" stop-opacity="0.66"/><stop offset="0.375" stop-color="rgb(141,169,192)" stop-opacity="0.66"/><stop offset="0.438" stop-color="rgb(139,175,194)" stop-opacity="0.66"/><stop offset="0.500" stop-color="rgb(137,182,197)" stop-opacity="0.66"/><stop offset="0.562" stop-color="rgb(134,189,199)" stop-opacity="0.66"/><stop offset="0.625" stop-color="rgb(133,193,200)" stop-opacity="0.58"/><stop offset="0.688" stop-color="rgb(133,193,200)" stop-opacity="0.44"/><stop offset="0.750" stop-color="rgb(133,193,200)" stop-opacity="0.30"/><stop offset="0.812" stop-color="rgb(133,193,200)" stop-opacity="0.18"/><stop offset="0.875" stop-color="rgb(133,193,200)" stop-opacity="0.09"/><stop offset="0.938" stop-color="rgb(133,193,200)" stop-opacity="0.02"/><stop offset="1.000" stop-color="rgb(133,193,200)" stop-opacity="0.00"/></radialGradient>
<radialGradient id="h54"><stop offset="0.000" stop-color="rgb(169,90,158)" stop-opacity="0.74"/><stop offset="0.062" stop-color="rgb(169,91,159)" stop-opacity="0.74"/><stop offset="0.125" stop-color="rgb(168,93,163)" stop-opacity="0.74"/><stop offset="0.188" stop-color="rgb(167,97,170)" stop-opacity="0.74"/><stop offset="0.250" stop-color="rgb(164,104,161)" stop-opacity="0.74"/><stop offset="0.312" stop-color="rgb(161,113,151)" stop-opacity="0.74"/><stop offset="0.375" stop-color="rgb(158,124,138)" stop-opacity="0.74"/><stop offset="0.438" stop-color="rgb(154,135,143)" stop-opacity="0.74"/><stop offset="0.500" stop-color="rgb(149,148,166)" stop-opacity="0.74"/><stop offset="0.562" stop-color="rgb(144,161,190)" stop-opacity="0.74"/><stop offset="0.625" stop-color="rgb(140,174,194)" stop-opacity="0.74"/><stop offset="0.688" stop-color="rgb(135,187,198)" stop-opacity="0.74"/><stop offset="0.750" stop-color="rgb(133,193,200)" stop-opacity="0.61"/><stop offset="0.812" stop-color="rgb(133,193,200)" stop-opacity="0.37"/><stop offset="0.875" stop-color="rgb(133,193,200)" stop-opacity="0.17"/><stop offset="0.938" stop-color="rgb(133,193,200)" stop-opacity="0.05"/><stop offset="1.000" stop-color="rgb(133,193,200)" stop-opacity="0.00"/></radialGradient>
<radialGradient id="h55"><stop offset="0.000" stop-color="rgb(134,191,200)" stop-opacity="0.66"/><stop offset="0.062" stop-color="rgb(133,192,200)" stop-opacity="0.66"/><stop offset="0.125" stop-color="rgb(133,192,200)" stop-opacity="0.66"/><stop offset="0.188" stop-color="rgb(133,193,200)" stop-opacity="0.64"/><stop offset="0.250" stop-color="rgb(133,193,200)" stop-opacity="0.61"/><stop offset="0.312" stop-color="rgb(133,193,200)" stop-opacity="0.56"/><stop offset="0.375" stop-color="rgb(133,193,200)" stop-opacity="0.51"/><stop offset="0.438" stop-color="rgb(133,193,200)" stop-opacity="0.45"/><stop offset="0.500" stop-color="rgb(133,193,200)" stop-opacity="0.39"/><stop offset="0.562" stop-color="rgb(133,193,200)" stop-opacity="0.32"/><stop offset="0.625" stop-color="rgb(133,193,200)" stop-opacity="0.26"/><stop offset="0.688" stop-color="rgb(133,193,200)" stop-opacity="0.19"/><stop offset="0.750" stop-color="rgb(133,193,200)" stop-opacity="0.13"/><stop offset="0.812" stop-color="rgb(133,193,200)" stop-opacity="0.08"/><stop offset="0.875" stop-color="rgb(133,193,200)" stop-opacity="0.04"/><stop offset="0.938" stop-color="rgb(133,193,200)" stop-opacity="0.01"/><stop offset="1.000" stop-color="rgb(133,193,200)" stop-opacity="0.00"/></radialGradient>
<radialGradient id="h56"><stop offset="0.000" stop-color="rgb(133,193,200)" stop-opacity="0.33"/><stop offset="0.062" stop-color="rgb(133,193,200)" stop-opacity="0.32"/><stop offset="0.125" stop-color="rgb(133,193,200)" stop-opacity="0.32"/><stop offset="0.188" stop-color="rgb(133,193,200)" stop-opacity="0.30"/><stop offset="0.250" stop-color="rgb(133,193,200)" stop-opacity="0.29"/><stop offset="0.312" stop-color="rgb(133,193,200)" stop-opacity="0.27"/><stop offset="0.375" stop-color="rgb(133,193,200)" stop-opacity="0.24"/><stop offset="0.438" stop-color="rgb(133,193,200)" stop-opacity="0.21"/><stop offset="0.500" stop-color="rgb(133,193,200)" stop-opacity="0.18"/><stop offset="0.562" stop-color="rgb(133,193,200)" stop-opacity="0.15"/><stop offset="0.625" stop-color="rgb(133,193,200)" stop-opacity="0.12"/><stop offset="0.688" stop-color="rgb(133,193,200)" stop-opacity="0.09"/><stop offset="0.750" stop-color="rgb(133,193,200)" stop-opacity="0.06"/><stop offset="0.812" stop-color="rgb(133,193,200)" stop-opacity="0.04"/><stop offset="0.875" stop-color="rgb(133,193,200)" stop-opacity="0.02"/><stop offset="0.938" stop-color="rgb(133,193,200)" stop-opacity="0.00"/><stop offset="1.000" stop-color="rgb(133,193,200)" stop-opacity="0.00"/></radialGradient>
<radialGradient id="h57"><stop offset="0.000" stop-color="rgb(133,193,200)" stop-opacity="0.27"/><stop offset="0.062" stop-color="rgb(133,193,200)" stop-opacity="0.27"/><stop offset="0.125" stop-color="rgb(133,193,200)" stop-opacity="0.26"/><stop offset="0.188" stop-color="rgb(133,193,200)" stop-opacity="0.25"/><stop offset="0.250" stop-color="rgb(133,193,200)" stop-opacity="0.24"/><stop offset="0.312" stop-color="rgb(133,193,200)" stop-opacity="0.22"/><stop offset="0.375" stop-color="rgb(133,193,200)" stop-opacity="0.20"/><stop offset="0.438" stop-color="rgb(133,193,200)" stop-opacity="0.18"/><stop offset="0.500" stop-color="rgb(133,193,200)" stop-opacity="0.15"/><stop offset="0.562" stop-color="rgb(133,193,200)" stop-opacity="0.13"/><stop offset="0.625" stop-color="rgb(133,193,200)" stop-opacity="0.10"/><stop offset="0.688" stop-color="rgb(133,193,200)" stop-opacity="0.08"/><stop offset="0.750" stop-color="rgb(133,193,200)" stop-opacity="0.05"/><stop offset="0.812" stop-color="rgb(133,193,200)" stop-opacity="0.03"/><stop offset="0.875" stop-color="rgb(133,193,200)" stop-opacity="0.01"/><stop offset="0.938" stop-color="rgb(133,193,200)" stop-opacity="0.00"/><stop offset="1.000" stop-color="rgb(133,193,200)" stop-opacity="0.00"/></radialGradient>
<radialGradient id="hs"><stop offset="0" stop-color="#ffff00" stop-opacity="0.93"/><stop offset="0.80" stop-color="#ffff00" stop-opacity="0.93"/><stop offset="0.84" stop-color="#f4cc00"/><stop offset="0.88" stop-color="#de6600"/><stop offset="0.93" stop-color="#cc1800"/><stop offset="0.97" stop-color="#b83055" stop-opacity="0.7"/><stop offset="1" stop-color="#90a1be" stop-opacity="0"/></radialGradient>
<radialGradient id="h59"><stop offset="0.000" stop-color="rgb(145,158,185)" stop-opacity="0.85"/><stop offset="0.062" stop-color="rgb(145,159,186)" stop-opacity="0.85"/><stop offset="0.125" stop-color="rgb(144,161,189)" stop-opacity="0.85"/><stop offset="0.188" stop-color="rgb(143,163,191)" stop-opacity="0.85"/><stop offset="0.250" stop-color="rgb(142,166,192)" stop-opacity="0.85"/><stop offset="0.312" stop-color="rgb(141,171,193)" stop-opacity="0.85"/><stop offset="0.375" stop-color="rgb(139,176,195)" stop-opacity="0.85"/><stop offset="0.438" stop-color="rgb(137,181,196)" stop-opacity="0.85"/><stop offset="0.500" stop-color="rgb(135,188,198)" stop-opacity="0.85"/><stop offset="0.562" stop-color="rgb(133,193,200)" stop-opacity="0.83"/><stop offset="0.625" stop-color="rgb(133,193,200)" stop-opacity="0.66"/><stop offset="0.688" stop-color="rgb(133,193,200)" stop-opacity="0.49"/><stop offset="0.750" stop-color="rgb(133,193,200)" stop-opacity="0.34"/><stop offset="0.812" stop-color="rgb(133,193,200)" stop-opacity="0.20"/><stop offset="0.875" stop-color="rgb(133,193,200)" stop-opacity="0.10"/><stop offset="0.938" stop-color="rgb(133,193,200)" stop-opacity="0.03"/><stop offset="1.000" stop-color="rgb(133,193,200)" stop-opacity="0.00"/></radialGradient>
</defs>
<rect x="235" y="88" width="793" height="378" fill="#f1efe6"/>
<path d="M335.5,82.0 L335.5,88.0 L342.3,97.1 L349.2,101.7 L350.3,107.4 L350.3,107.4 L362.9,113.1 L376.6,120.0 L383.4,125.7 L381.1,132.5 L369.7,135.9 L365.1,145.1 L366.3,151.9 L376.6,157.6 L390.3,159.9 L403.9,155.4 L417.6,154.2 L429.1,156.5 L435.0,159.9 L446.4,161.1 L457.8,165.6 L469.2,169.1 L480.7,173.6 L494.4,172.5 L508.1,167.9 L521.8,165.6 L530.9,169.1 L540.0,173.6 L553.7,170.2 L567.4,173.6 L578.8,175.9 L592.5,181.6 L603.9,180.5 L617.6,175.9 L629.1,172.5 L635.0,166.8 L641.8,161.1 L651.0,150.8 L660.1,142.8 L671.5,135.9 L685.2,130.2 L701.2,126.8 L717.2,123.4 L733.2,118.8 L749.2,116.5 L762.9,116.5 L772.0,120.0 L776.6,128.0 L783.4,132.5 L794.8,132.5 L803.9,130.2 L808.5,137.1 L817.6,134.8 L826.8,135.9 L831.3,142.8 L835.0,149.6 L832.6,149.6 L841.7,158.8 L853.1,164.5 L866.8,165.6 L885.1,166.8 L887.1,166.8 L889.4,156.5 L891.6,138.2 L895.1,124.5 L897.4,110.8 L896.2,97.1 L898.5,88.0 L898.5,82.0Z" fill="#eef1d9"/>
<g filter="url(#fl)"><rect x="235" y="88" width="793" height="378" fill="#000" opacity="0.55"/><ellipse cx="560" cy="115" rx="200" ry="40"/><ellipse cx="850" cy="125" rx="40" ry="35"/><ellipse cx="715" cy="200" rx="40" ry="30"/><ellipse cx="800" cy="200" rx="25" ry="25"/><ellipse cx="450" cy="125" rx="60" ry="30"/><ellipse cx="700" cy="150" rx="60" ry="20"/><ellipse cx="750" cy="440" rx="50" ry="20"/><ellipse cx="800" cy="450" rx="30" ry="14"/><ellipse cx="690" cy="440" rx="30" ry="20"/></g>
<g filter="url(#fw)"><path d="M229.0,82.0 L335.5,82.0 L335.5,88.0 L342.3,97.1 L349.2,101.7 L350.3,107.4 L350.3,107.4 L348.0,113.1 L342.3,126.8 L333.2,130.2 L326.3,133.7 L325.2,142.8 L321.8,156.5 L326.3,167.9 L333.2,179.3 L336.6,195.3 L342.3,204.4 L353.7,211.3 L362.9,220.4 L372.0,231.8 L369.7,228.0 L378.8,234.8 L378.8,246.3 L372.0,253.1 L362.9,260.0 L358.3,271.4 L349.2,273.7 L335.5,275.9 L328.6,282.8 L332.0,294.2 L328.6,305.6 L333.2,319.3 L338.9,328.5 L335.5,337.6 L321.8,342.2 L314.9,339.9 L314.9,338.8 L321.8,345.7 L330.9,357.1 L340.0,366.2 L353.7,375.4 L365.1,382.2 L369.7,393.6 L374.3,405.0 L381.1,416.5 L378.8,430.2 L376.6,443.9 L377.7,457.6 L374.7,463.9 L374.7,472.0 L229.0,472.0Z"/><path d="M374.7,472.0 L374.7,463.9 L374.7,463.9 L390.3,463.3 L403.9,462.1 L417.6,459.8 L426.8,457.6 L435.0,457.6 L444.1,455.3 L455.5,450.7 L464.7,447.3 L476.1,440.4 L489.8,439.3 L501.2,440.4 L512.6,437.0 L521.8,442.7 L526.3,453.0 L537.7,459.8 L553.7,458.7 L567.4,462.1 L576.6,466.0 L577.0,470.0 L620.0,470.0 L664.7,466.0 L670.4,457.6 L664.7,472.0Z"/></g>
<path d="M229.0,82.0 L335.5,82.0 L335.5,88.0 L342.3,97.1 L349.2,101.7 L350.3,107.4 L350.3,107.4 L348.0,113.1 L342.3,126.8 L333.2,130.2 L326.3,133.7 L325.2,142.8 L321.8,156.5 L326.3,167.9 L333.2,179.3 L336.6,195.3 L342.3,204.4 L353.7,211.3 L362.9,220.4 L372.0,231.8 L369.7,228.0 L378.8,234.8 L378.8,246.3 L372.0,253.1 L362.9,260.0 L358.3,271.4 L349.2,273.7 L335.5,275.9 L328.6,282.8 L332.0,294.2 L328.6,305.6 L333.2,319.3 L338.9,328.5 L335.5,337.6 L321.8,342.2 L314.9,339.9 L314.9,338.8 L321.8,345.7 L330.9,357.1 L340.0,366.2 L353.7,375.4 L365.1,382.2 L369.7,393.6 L374.3,405.0 L381.1,416.5 L378.8,430.2 L376.6,443.9 L377.7,457.6 L374.7,463.9 L374.7,472.0 L229.0,472.0Z" fill="#d3e4c4" opacity="0.33"/>
<path d="M350.3,107.4 L362.9,113.1 L376.6,120.0 L383.4,125.7 L381.1,132.5 L369.7,135.9 L365.1,145.1 L366.3,151.9 L376.6,157.6 L390.3,159.9 L403.9,155.4 L417.6,154.2 L429.1,156.5 L435.0,159.9 L446.4,161.1 L457.8,165.6 L469.2,169.1 L480.7,173.6 L494.4,172.5 L508.1,167.9 L521.8,165.6 L530.9,169.1 L540.0,173.6 L553.7,170.2 L567.4,173.6 L578.8,175.9 L592.5,181.6 L603.9,180.5 L617.6,175.9 L629.1,172.5 L635.0,166.8 L641.8,161.1 L651.0,150.8 L660.1,142.8 L671.5,135.9 L685.2,130.2 L701.2,126.8 L717.2,123.4 L733.2,118.8 L749.2,116.5 L762.9,116.5 L772.0,120.0 L776.6,128.0 L783.4,132.5 L794.8,132.5 L803.9,130.2 L808.5,137.1 L817.6,134.8 L826.8,135.9 L831.3,142.8 L835.0,149.6 L832.6,149.6 L841.7,158.8 L853.1,164.5 L866.8,165.6 L885.1,166.8 L885.1,166.8 L886.2,179.3 L888.5,190.7 L885.1,202.2 L878.2,213.6 L866.8,210.1 L853.1,209.0 L844.0,212.4 L837.1,219.3 L832.6,227.3 L829.1,234.1 L826.8,241.7 L824.5,253.1 L823.4,269.1 L822.2,282.8 L813.1,291.9 L808.5,298.8 L803.9,305.6 L799.4,313.6 L803.9,323.9 L810.8,335.3 L815.4,346.7 L822.2,358.1 L829.1,367.3 L835.0,374.1 L833.7,375.4 L837.1,384.5 L837.1,385.6 L824.5,384.5 L815.4,389.1 L803.9,391.3 L794.8,394.8 L785.7,386.8 L776.6,377.6 L765.1,371.9 L753.7,375.4 L744.6,373.1 L740.0,382.2 L726.3,384.5 L712.6,387.9 L705.8,393.6 L701.2,403.9 L689.8,406.2 L682.9,411.9 L681.8,417.6 L681.8,417.6 L669.2,418.7 L660.1,421.0 L659.0,430.2 L664.7,439.3 L669.2,448.4 L670.4,457.6 L664.7,466.0 L620.0,470.0 L577.0,470.0 L576.6,466.0 L567.4,462.1 L553.7,458.7 L537.7,459.8 L526.3,453.0 L521.8,442.7 L512.6,437.0 L501.2,440.4 L489.8,439.3 L476.1,440.4 L464.7,447.3 L455.5,450.7 L444.1,455.3 L435.0,457.6 L426.8,457.6 L417.6,459.8 L403.9,462.1 L390.3,463.3 L374.7,463.9 L374.7,463.9 L377.7,457.6 L376.6,443.9 L378.8,430.2 L381.1,416.5 L374.3,405.0 L369.7,393.6 L365.1,382.2 L353.7,375.4 L340.0,366.2 L330.9,357.1 L321.8,345.7 L314.9,338.8 L314.9,339.9 L321.8,342.2 L335.5,337.6 L338.9,328.5 L333.2,319.3 L328.6,305.6 L332.0,294.2 L328.6,282.8 L335.5,275.9 L349.2,273.7 L358.3,271.4 L362.9,260.0 L372.0,253.1 L378.8,246.3 L378.8,234.8 L369.7,228.0 L372.0,231.8 L362.9,220.4 L353.7,211.3 L342.3,204.4 L336.6,195.3 L333.2,179.3 L326.3,167.9 L321.8,156.5 L325.2,142.8 L326.3,133.7 L333.2,130.2 L342.3,126.8 L348.0,113.1 L350.3,107.4Z" fill="#f4f2ec" opacity="0.62" filter="url(#hz)"/>
<g filter="url(#ff)"><rect x="235" y="88" width="1" height="1" fill="#000" opacity="0.01"/><rect x="1027" y="465" width="1" height="1" opacity="0.01"/><ellipse cx="470" cy="284" rx="40" ry="8"/><ellipse cx="520" cy="288" rx="30" ry="8"/><ellipse cx="455" cy="296" rx="22" ry="8"/><ellipse cx="492" cy="318" rx="34" ry="14"/><ellipse cx="480" cy="304" rx="24" ry="8"/><ellipse cx="558" cy="323" rx="14" ry="8"/><ellipse cx="652" cy="288" rx="18" ry="8"/><ellipse cx="598" cy="287" rx="14" ry="6"/><ellipse cx="732" cy="270" rx="17" ry="24"/><ellipse cx="750" cy="285" rx="12" ry="10"/><ellipse cx="795" cy="366" rx="38" ry="22"/><ellipse cx="768" cy="352" rx="26" ry="14"/><ellipse cx="812" cy="345" rx="16" ry="12"/><ellipse cx="760" cy="372" rx="16" ry="8"/><ellipse cx="822" cy="425" rx="14" ry="16"/><ellipse cx="836" cy="452" rx="12" ry="14"/><ellipse cx="415" cy="345" rx="18" ry="26"/><ellipse cx="470" cy="333" rx="30" ry="14"/><ellipse cx="420" cy="408" rx="14" ry="16"/><ellipse cx="478" cy="413" rx="15" ry="9"/><ellipse cx="503" cy="455" rx="24" ry="9"/><ellipse cx="545" cy="462" rx="20" ry="6"/><ellipse cx="440" cy="362" rx="12" ry="10"/><ellipse cx="352" cy="192" rx="6" ry="13"/><ellipse cx="368" cy="225" rx="10" ry="6"/><ellipse cx="455" cy="268" rx="14" ry="8"/><ellipse cx="690" cy="265" rx="12" ry="8"/><ellipse cx="800" cy="215" rx="10" ry="8"/></g>
<path d="M896.5,88.0 L894.2,97.1 L895.4,110.8 L893.1,124.5 L889.6,138.2 L887.4,156.5 L885.1,166.8 L886.2,179.3 L888.5,190.7 L885.1,202.2 L878.2,213.6 L866.8,210.1 L853.1,209.0 L844.0,212.4 L837.1,219.3 L832.6,227.3 L829.1,234.1 L826.8,241.7 L824.5,253.1 L823.4,269.1 L822.2,282.8 L813.1,291.9 L808.5,298.8 L803.9,305.6 L799.4,313.6 L803.9,323.9 L810.8,335.3 L815.4,346.7 L822.2,358.1 L829.1,367.3 L835.0,374.1 L833.7,375.4 L837.1,384.5 L838.3,393.6 L834.8,400.5 L837.1,409.6 L844.0,421.0 L849.7,432.4 L857.7,443.9 L869.1,455.3 L885.1,466.0 L885.1,472.0 L1034.0,472.0 L1034.0,82.0 L896.5,82.0Z" fill="#aad3df"/>
<path d="M772.0,120.0 L781.1,114.3 L794.8,108.5 L813.1,101.7 L835.0,92.6 L841.7,88.0" fill="none" stroke="#aad3df" stroke-width="1.6"/>
<path d="M503.5,88.0 L512.6,106.3 L521.8,124.5 L526.3,140.5 L535.5,156.5 L533.2,167.9" fill="none" stroke="#b5d8e2" stroke-width="1.1"/>
<g fill="none" stroke="#c4b3d3" stroke-width="0.8" stroke-linejoin="round"><path d="M376.6,163.3 L383.4,174.8 L374.3,183.9 L372.0,195.3 L362.9,202.2 L358.3,211.3"/><path d="M435.0,170.2 L417.6,183.9 L413.1,197.6 L410.8,215.9 L415.4,225.0 L431.3,227.3"/><path d="M469.2,186.2 L471.5,202.2 L467.0,215.9 L473.8,229.6 L480.7,238.0"/><path d="M471.5,186.2 L487.5,179.3 L494.4,173.6"/><path d="M562.9,213.6 L572.0,202.2 L574.3,188.5 L581.1,179.3 L578.8,175.9"/><path d="M480.7,238.0 L510.3,229.6 L530.9,222.7 L549.2,218.1 L562.9,213.6 L581.1,215.9 L572.0,234.1"/><path d="M490.9,106.3 L489.8,129.1 L484.1,156.5 L481.8,172.5"/><path d="M544.6,88.0 L546.9,115.4 L526.3,133.7 L535.5,156.5 L533.2,167.9"/><path d="M622.2,88.0 L624.5,115.4 L615.4,133.7 L619.9,156.5 L624.5,173.6"/><path d="M687.5,131.4 L689.8,142.8 L703.5,147.4 L719.5,154.2 L733.2,156.5 L744.6,172.5 L753.7,174.8 L762.9,163.3 L776.6,156.5 L792.5,151.9 L803.9,138.2"/><path d="M687.5,142.8 L680.7,156.5 L694.4,170.2 L692.1,183.9 L676.1,188.5 L667.0,183.9 L669.2,197.6 L655.5,206.7 L635.0,215.9"/><path d="M692.1,183.9 L701.2,195.3 L721.8,197.6 L726.3,188.5 L744.6,172.5"/><path d="M753.7,174.8 L772.0,186.2 L774.3,202.2 L767.4,215.9 L772.0,225.0 L794.8,222.7"/><path d="M701.2,195.3 L698.9,211.3 L712.6,215.9 L714.9,238.0"/><path d="M689.8,88.0 L690.9,110.8 L685.2,130.2"/><path d="M657.8,228.0 L664.7,241.7 L660.1,262.2 L667.0,273.7 L648.7,285.1 L635.0,289.6"/><path d="M705.8,269.1 L726.3,268.0 L749.2,266.8 L758.3,255.4 L772.0,262.2 L783.4,273.7 L808.5,275.9 L822.2,280.5"/><path d="M705.8,269.1 L708.1,282.8 L714.9,294.2 L712.6,303.3 L724.0,307.9 L735.5,335.3 L730.9,355.9 L742.3,365.0 L744.6,374.1"/><path d="M667.0,273.7 L680.7,255.4 L692.1,257.7 L714.9,253.1 L712.6,237.1 L726.3,228.0"/><path d="M758.3,255.4 L760.6,241.7 L772.0,228.0"/><path d="M635.0,323.9 L648.7,328.5 L667.0,335.3 L669.2,355.9 L667.0,365.0 L680.7,374.1"/><path d="M558.3,234.8 L553.7,257.7 L558.3,280.5 L562.9,294.2 L562.9,314.8 L572.0,326.2 L574.3,351.3 L569.7,365.0"/><path d="M464.7,228.0 L473.8,241.7 L485.2,250.8 L482.9,273.7 L489.8,285.1 L514.9,287.4 L510.3,296.5 L505.8,319.3 L510.3,335.3 L512.6,355.9"/><path d="M464.7,319.3 L476.1,314.8 L471.5,335.3 L455.5,337.6 L464.7,351.3 L462.4,365.0"/><path d="M562.9,294.2 L542.3,295.4"/><path d="M510.3,391.3 L512.6,395.9 L537.7,400.5 L542.3,414.2 L558.3,416.5 L565.1,405.0 L581.1,398.2 L594.8,391.3"/><path d="M510.3,391.3 L503.5,407.3 L489.8,421.0 L478.4,425.6 L476.1,440.4"/><path d="M565.1,405.0 L569.7,416.5 L562.9,434.7 L569.7,443.9 L576.6,453.0"/><path d="M581.1,398.2 L592.5,407.3 L615.4,411.9 L619.9,423.3 L635.0,427.9"/><path d="M667.0,359.4 L680.7,361.7 L698.9,368.5 L701.2,386.8 L708.1,391.3"/><path d="M635.0,370.8 L651.0,375.4 L664.7,373.1 L667.0,359.4 L669.2,341.1 L662.4,325.1"/><path d="M730.9,334.3 L742.3,345.7 L737.7,357.1 L744.6,373.1"/><path d="M346.9,316.0 L353.7,329.7 L372.0,338.8 L390.3,336.5 L392.5,316.0"/><path d="M399.4,322.8 L413.1,338.8 L426.8,357.1 L431.3,370.8 L422.2,373.1 L403.9,384.5"/><path d="M429.1,434.7 L431.3,443.9 L426.8,457.6"/><path d="M358.3,271.4 L367.4,280.5 L381.1,285.1 L394.8,280.5 L408.5,273.7 L424.5,275.9 L435.0,271.4"/><path d="M335.5,303.3 L344.6,314.8 L353.7,328.5 L372.0,335.3 L392.5,335.3"/><path d="M289.8,382.2 L298.9,391.3 L296.6,405.0 L292.1,411.9"/><path d="M328.6,411.9 L340.0,411.9 L349.2,427.9 L358.3,434.7"/></g>
<g fill="none" stroke="#e6859b" stroke-width="1.1" stroke-linejoin="round" opacity="0.9"><path d="M235.0,150.8 L241.8,165.6 L253.3,183.9 L264.7,197.6 L271.5,215.9 L269.2,238.0 L272.7,228.0 L280.7,241.7 L292.1,269.1 L298.9,280.5 L292.1,303.3 L278.4,317.0 L264.7,335.3 L260.1,355.9 L261.3,378.0"/><path d="M271.5,217.0 L285.2,222.7 L303.5,230.7 L326.3,231.8 L342.3,241.7 L353.7,255.4 L361.7,260.0"/><path d="M374.3,271.4 L385.7,277.1 L394.8,287.4 L403.9,294.2"/><path d="M392.5,305.6 L390.3,319.3 L392.5,335.3 L385.7,355.9 L383.4,378.0 L385.7,350.2 L381.1,373.1 L394.8,423.3 L403.9,443.9 L408.5,466.0"/><path d="M435.0,294.2 L448.7,285.1 L453.3,273.7 L469.2,264.5 L480.7,254.3 L489.8,253.1"/><path d="M422.2,301.1 L435.0,307.9 L435.0,310.2 L448.7,323.9 L462.4,337.6 L480.7,346.7 L503.5,355.9 L521.8,359.3 L542.3,360.4 L572.0,358.1 L594.8,351.3 L617.6,342.2 L635.0,335.3 L635.0,328.5 L657.8,325.0 L680.7,319.3 L703.5,315.9 L726.3,314.8 L749.2,310.2 L772.0,309.1 L783.4,312.5"/><path d="M572.0,358.2 L585.7,361.7 L599.4,370.8 L613.1,382.2 L635.0,402.8 L635.0,389.1 L653.3,398.2 L669.2,411.9 L682.9,417.6 L701.2,423.3 L721.8,430.2 L742.3,437.0 L762.9,443.9 L781.1,453.0"/><path d="M237.3,384.5 L248.7,384.5 L264.7,391.3 L280.7,400.5 L298.9,409.6 L308.1,402.8"/><path d="M257.8,400.5 L264.7,414.2 L280.7,430.2 L298.9,448.4 L319.5,462.1"/><path d="M383.4,132.5 L403.9,124.5 L424.5,116.5 L435.0,113.1 L435.0,113.1 L448.7,101.7 L460.1,94.8 L480.7,88.0"/><path d="M489.8,120.0 L521.8,118.8 L558.3,118.8"/><path d="M558.3,131.4 L594.8,135.9 L608.5,126.8 L626.8,117.7 L635.0,110.8"/><path d="M651.0,156.5 L652.1,133.7 L651.0,110.8 L660.1,88.0"/><path d="M635.0,101.7 L648.7,92.6 L657.8,88.0"/><path d="M837.1,88.0 L841.7,101.7 L855.4,110.8 L871.4,116.5 L889.6,117.7 L893.1,126.8 L890.8,142.8 L887.8,156.5"/><path d="M875.9,88.0 L882.8,101.7 L885.1,116.5"/><path d="M764.0,416.5 L758.3,430.2 L753.7,443.9"/><path d="M764.0,416.5 L769.7,419.9 L775.4,421.0"/><path d="M701.2,423.3 L703.5,443.9 L710.3,466.0"/><path d="M726.3,434.7 L730.9,453.0 L728.6,466.0"/><path d="M766.7,224.0 L785.5,228.8 L810.5,230.3 L820.0,231.5"/></g>
<g fill="none" stroke="#948cb3" stroke-width="1.3" stroke-linejoin="round"><path d="M935.3,88.0 L928.5,106.3 L921.6,129.1 L917.0,151.9 L912.5,167.9 L914.8,183.9 L913.6,197.6 L907.9,213.6 L898.8,227.3 L889.6,235.3 L889.6,236.0 L875.9,239.4 L860.0,238.3 L853.1,250.8 L849.7,262.2 L850.8,285.1 L848.5,307.9 L844.0,328.5 L841.7,344.4 L841.7,343.4 L850.8,357.1 L860.0,373.1 L863.4,385.6 L862.2,407.3 L870.2,423.3 L887.4,434.7 L907.9,443.9 L930.7,450.7 L965.0,455.3 L1001.5,462.1 L1028.0,457.6"/><path d="M885.1,166.8 L912.5,167.9"/><path d="M837.1,385.6 L863.4,385.6"/><path d="M845.1,433.6 L870.2,424.4"/></g>
<g fill="none" stroke="#a49dab" stroke-width="2" stroke-linejoin="round" stroke-linecap="round"><path d="M335.5,88.0 L342.3,97.1 L349.2,101.7 L350.3,107.4"/><path d="M350.3,107.4 L362.9,113.1 L376.6,120.0 L383.4,125.7 L381.1,132.5 L369.7,135.9 L365.1,145.1 L366.3,151.9 L376.6,157.6 L390.3,159.9 L403.9,155.4 L417.6,154.2 L429.1,156.5 L435.0,159.9 L446.4,161.1 L457.8,165.6 L469.2,169.1 L480.7,173.6 L494.4,172.5 L508.1,167.9 L521.8,165.6 L530.9,169.1 L540.0,173.6 L553.7,170.2 L567.4,173.6 L578.8,175.9 L592.5,181.6 L603.9,180.5 L617.6,175.9 L629.1,172.5 L635.0,166.8 L641.8,161.1 L651.0,150.8 L660.1,142.8 L671.5,135.9 L685.2,130.2 L701.2,126.8 L717.2,123.4 L733.2,118.8 L749.2,116.5 L762.9,116.5 L772.0,120.0 L776.6,128.0 L783.4,132.5 L794.8,132.5 L803.9,130.2 L808.5,137.1 L817.6,134.8 L826.8,135.9 L831.3,142.8 L835.0,149.6 L832.6,149.6 L841.7,158.8 L853.1,164.5 L866.8,165.6 L885.1,166.8"/><path d="M350.3,107.4 L348.0,113.1 L342.3,126.8 L333.2,130.2 L326.3,133.7 L325.2,142.8 L321.8,156.5 L326.3,167.9 L333.2,179.3 L336.6,195.3 L342.3,204.4 L353.7,211.3 L362.9,220.4 L372.0,231.8 L369.7,228.0 L378.8,234.8 L378.8,246.3 L372.0,253.1 L362.9,260.0 L358.3,271.4 L349.2,273.7 L335.5,275.9 L328.6,282.8 L332.0,294.2 L328.6,305.6 L333.2,319.3 L338.9,328.5 L335.5,337.6 L321.8,342.2 L314.9,339.9"/><path d="M314.9,338.8 L321.8,345.7 L330.9,357.1 L340.0,366.2 L353.7,375.4 L365.1,382.2 L369.7,393.6 L374.3,405.0 L381.1,416.5 L378.8,430.2 L376.6,443.9 L377.7,457.6 L374.7,463.9"/><path d="M314.9,338.8 L303.5,343.4 L289.8,345.7 L280.7,343.4 L269.2,349.1 L257.8,352.5 L248.7,351.4 L241.8,350.2 L235.0,352.5"/><path d="M248.7,351.4 L252.1,336.5 L262.4,325.1 L267.0,316.0 L262.4,312.5 L257.8,296.5 L244.1,291.9 L235.0,289.6"/><path d="M374.7,463.9 L362.9,464.4 L349.2,466.0"/><path d="M837.1,385.6 L824.5,384.5 L815.4,389.1 L803.9,391.3 L794.8,394.8 L785.7,386.8 L776.6,377.6 L765.1,371.9 L753.7,375.4 L744.6,373.1 L740.0,382.2 L726.3,384.5 L712.6,387.9 L705.8,393.6 L701.2,403.9 L689.8,406.2 L682.9,411.9 L681.8,417.6"/><path d="M681.8,417.6 L669.2,418.7 L660.1,421.0 L659.0,430.2 L664.7,439.3 L669.2,448.4 L670.4,457.6 L664.7,466.0"/><path d="M576.6,466.0 L567.4,462.1 L553.7,458.7 L537.7,459.8 L526.3,453.0 L521.8,442.7 L512.6,437.0 L501.2,440.4 L489.8,439.3 L476.1,440.4 L464.7,447.3 L455.5,450.7 L444.1,455.3 L435.0,457.6 L426.8,457.6 L417.6,459.8 L403.9,462.1 L390.3,463.3 L374.7,463.9"/><path d="M681.8,417.6 L689.8,419.9 L703.5,425.6 L708.1,434.7 L706.9,443.9 L703.5,453.0 L705.8,466.0"/></g>
<g fill="#fff" stroke="#555" stroke-width="0.7"><circle cx="297.2" cy="124.7" r="1.6"/><circle cx="313.7" cy="147.3" r="1.6"/><circle cx="368" cy="135.7" r="1.6"/><circle cx="429.4" cy="235.4" r="1.6"/><circle cx="279" cy="221" r="1.6"/><circle cx="341.4" cy="241.5" r="1.6"/><circle cx="247.6" cy="231" r="1.6"/><circle cx="283.8" cy="261.1" r="1.6"/><circle cx="593.1" cy="183.4" r="1.6"/><circle cx="699.6" cy="193.6" r="1.6"/><circle cx="618.6" cy="249.4" r="1.6"/><circle cx="704.5" cy="228.9" r="1.6"/><circle cx="774.5" cy="110" r="1.6"/><circle cx="887.9" cy="157.4" r="1.6"/><circle cx="597.8" cy="306.3" r="1.6"/><circle cx="696.7" cy="324.3" r="1.6"/><circle cx="550" cy="382.9" r="1.6"/><circle cx="611.4" cy="391.4" r="1.6"/><circle cx="703.3" cy="423.2" r="1.6"/><circle cx="764" cy="415.8" r="1.6"/><circle cx="387.5" cy="382.7" r="1.6"/><circle cx="279.3" cy="315.6" r="1.6"/><circle cx="238.4" cy="326.6" r="1.6"/><circle cx="325.9" cy="394.1" r="1.6"/><circle cx="398" cy="458" r="1.6"/><circle cx="501" cy="359.5" r="1.6"/><circle cx="648.4" cy="155.1" r="1.6"/><circle cx="830" cy="233.5" r="1.6"/><circle cx="784" cy="319" r="1.6"/><circle cx="408.6" cy="297.7" r="2.6"/><circle cx="237.7" cy="384.5" r="2.6"/></g>
<g fill="#555"><circle cx="408.6" cy="297.7" r="1"/><circle cx="237.7" cy="384.5" r="1"/></g>
<g style="paint-order:stroke;stroke:#fff;stroke-opacity:0.75;stroke-width:1.6px;stroke-linejoin:round;">
<text x="297.2" y="121.2" text-anchor="middle" style="font-size:10.4px;fill:#2e2e2e;">Бор</text>
<text x="313.5" y="143.8" text-anchor="middle" style="font-size:10.4px;fill:#2e2e2e;">Зајечар</text>
<text x="368.1" y="147.7" text-anchor="middle" style="font-size:10.4px;fill:#2e2e2e;">Видин</text>
<text x="352.2" y="165.0" text-anchor="middle" style="font-size:11px;font-style:italic;fill:#86729c;">Видин</text>
<text x="440.4" y="112.2" text-anchor="middle" style="font-size:11px;font-style:italic;fill:#86729c;">Dolj</text>
<text x="390.0" y="204.5" text-anchor="middle" style="font-size:11px;font-style:italic;fill:#86729c;">Монтана</text>
<text x="444.7" y="214.9" text-anchor="middle" style="font-size:11px;font-style:italic;fill:#86729c;">Враца</text>
<text x="429.4" y="232.5" text-anchor="middle" style="font-size:10.4px;fill:#2e2e2e;">Враца</text>
<text x="279.3" y="216.7" text-anchor="middle" style="font-size:10.4px;fill:#2e2e2e;">Ниш</text>
<text x="341.4" y="238.0" text-anchor="middle" style="font-size:10.4px;fill:#2e2e2e;">Пирот</text>
<text x="283.6" y="273.4" text-anchor="middle" style="font-size:10.4px;fill:#2e2e2e;">Лесковац</text>
<text x="513.5" y="102.3" text-anchor="middle" style="font-size:11px;font-style:italic;fill:#86729c;">Olt</text>
<text x="578.7" y="130.0" text-anchor="middle" style="font-size:11px;font-style:italic;fill:#86729c;">Teleorman</text>
<text x="657.7" y="123.5" text-anchor="middle" style="font-size:11px;font-style:italic;fill:#86729c;">Giurgiu</text>
<text x="756.5" y="99.0" text-anchor="middle" style="font-size:11px;font-style:italic;fill:#86729c;">Călărași</text>
<text x="774.0" y="122.2" text-anchor="middle" style="font-size:10.4px;fill:#2e2e2e;">Călărași</text>
<text x="648.1" y="151.2" text-anchor="middle" style="font-size:10.4px;fill:#2e2e2e;">Русе</text>
<text x="656.2" y="180.5" text-anchor="middle" style="font-size:11px;font-style:italic;fill:#86729c;">Русе</text>
<text x="749.5" y="152.5" text-anchor="middle" style="font-size:11px;font-style:italic;fill:#86729c;">Силистра</text>
<text x="593.5" y="195.7" text-anchor="middle" style="font-size:10.4px;fill:#2e2e2e;">Свищов</text>
<text x="526.0" y="204.5" text-anchor="middle" style="font-size:11px;font-style:italic;fill:#86729c;">Плевен</text>
<text x="716.8" y="185.3" text-anchor="middle" style="font-size:11px;font-style:italic;fill:#86729c;">Разград</text>
<text x="700.2" y="207.0" text-anchor="middle" style="font-size:10.4px;fill:#2e2e2e;">Разград</text>
<text x="745.9" y="227.0" text-anchor="middle" style="font-size:11px;font-style:italic;fill:#86729c;">Шумен</text>
<text x="617.2" y="238.5" text-anchor="middle" style="font-size:11px;font-style:italic;fill:#86729c;">Велико Търново</text>
<text x="618.6" y="262.0" text-anchor="middle" style="font-size:10.4px;fill:#2e2e2e;">Велико</text>
<text x="618.6" y="274.2" text-anchor="middle" style="font-size:10.4px;fill:#2e2e2e;">Търново</text>
<text x="704.6" y="241.2" text-anchor="middle" style="font-size:10.4px;fill:#2e2e2e;">Търговище</text>
<text x="514.9" y="260.0" text-anchor="middle" style="font-size:11px;font-style:italic;fill:#86729c;">Ловеч</text>
<text x="881.3" y="106.0" text-anchor="middle" style="font-size:11px;font-style:italic;fill:#86729c;">Constanța</text>
<text x="887.9" y="170.7" text-anchor="middle" style="font-size:10.4px;fill:#2e2e2e;">Mangalia</text>
<text x="825.2" y="183.3" text-anchor="middle" style="font-size:11px;font-style:italic;fill:#86729c;">Добрич</text>
<text x="796.8" y="238.0" text-anchor="middle" style="font-size:11px;font-style:italic;fill:#86729c;">Варна</text>
<text x="849.5" y="239.2" text-anchor="middle" style="font-size:10.4px;fill:#2e2e2e;">Варна</text>
<text x="592.5" y="298.1" text-anchor="middle" style="font-size:14.3px;fill:#625368;letter-spacing:0.55px;">България</text>
<text x="597.6" y="318.7" text-anchor="middle" style="font-size:10.4px;fill:#2e2e2e;">Казанлък</text>
<text x="676.3" y="309.0" text-anchor="middle" style="font-size:11px;font-style:italic;fill:#86729c;">Сливен</text>
<text x="719.0" y="328.7" text-anchor="middle" style="font-size:10.4px;fill:#2e2e2e;">Ямбол</text>
<text x="703.7" y="350.5" text-anchor="middle" style="font-size:11px;font-style:italic;fill:#86729c;">Ямбол</text>
<text x="611.4" y="337.7" text-anchor="middle" style="font-size:11px;font-style:italic;fill:#86729c;">Стара Загора</text>
<text x="759.5" y="333.0" text-anchor="middle" style="font-size:11px;font-style:italic;fill:#86729c;">Бургас</text>
<text x="542.3" y="359.5" text-anchor="middle" style="font-size:11px;font-style:italic;fill:#86729c;">Пловдив</text>
<text x="550.4" y="379.5" text-anchor="middle" style="font-size:10.4px;fill:#2e2e2e;">Асеновград</text>
<text x="611.4" y="388.7" text-anchor="middle" style="font-size:10.4px;fill:#2e2e2e;">Хасково</text>
<text x="646.0" y="417.5" text-anchor="middle" style="font-size:11px;font-style:italic;fill:#86729c;">Хасково</text>
<text x="524.6" y="435.0" text-anchor="middle" style="font-size:11px;font-style:italic;fill:#86729c;">Смолян</text>
<text x="597.8" y="441.8" text-anchor="middle" style="font-size:11px;font-style:italic;fill:#86729c;">Кърджали</text>
<text x="703.2" y="435.5" text-anchor="middle" style="font-size:10.4px;fill:#2e2e2e;">Edirne</text>
<text x="764.0" y="412.2" text-anchor="middle" style="font-size:10.4px;fill:#2e2e2e;">Kırklareli</text>
<text x="804.0" y="429.3" text-anchor="middle" style="font-size:11px;font-style:italic;fill:#86729c;">Kırklareli</text>
<text x="408.6" y="290.7" text-anchor="middle" style="font-size:10.4px;fill:#2e2e2e;">София</text>
<text x="467.0" y="311.0" text-anchor="middle" style="font-size:11px;font-style:italic;fill:#86729c;">Софийска</text>
<text x="369.5" y="348.7" text-anchor="middle" style="font-size:11px;font-style:italic;fill:#86729c;">Кюстендил</text>
<text x="387.6" y="379.2" text-anchor="middle" style="font-size:10.4px;fill:#2e2e2e;">Благоевград</text>
<text x="423.0" y="418.7" text-anchor="middle" style="font-size:11px;font-style:italic;fill:#86729c;">Благоевград</text>
<text x="469.0" y="365.2" text-anchor="middle" style="font-size:10.4px;fill:#2e2e2e;">Пазарджик</text>
<text x="279.3" y="312.3" text-anchor="middle" style="font-size:10.4px;fill:#2e2e2e;">Врање</text>
<text x="326.0" y="390.5" text-anchor="middle" style="font-size:10.4px;fill:#2e2e2e;">Кочани</text>
<text x="265.8" y="428.4" text-anchor="middle" style="font-size:13.5px;fill:#67586f;letter-spacing:0.6px;">Северна</text>
<text x="348.0" y="450.3" text-anchor="middle" style="font-size:11px;font-style:italic;fill:#86729c;">Југоисточен</text>
<text x="348.0" y="463.0" text-anchor="middle" style="font-size:11px;font-style:italic;fill:#86729c;">СР</text>
<text x="419.5" y="462.0" text-anchor="middle" style="font-size:10.4px;fill:#2e2e2e;">Петрич</text>
<text x="275.8" y="243.0" text-anchor="end" style="font-size:10.4px;fill:#2e2e2e;">Прокупље</text>
<text x="253.3" y="324.0" text-anchor="end" style="font-size:10.4px;fill:#2e2e2e;">Gjilan</text>
<text x="255.5" y="378.1" text-anchor="end" style="font-size:10.4px;fill:#2e2e2e;">Скопје</text>
<text x="304.8" y="445.4" text-anchor="end" style="font-size:13.5px;fill:#67586f;letter-spacing:0.6px;">Македонија</text>
</g>
<g><circle cx="368.0" cy="133.0" r="23" fill="url(#h0)"/><circle cx="405.7" cy="160.3" r="23" fill="url(#h1)"/><circle cx="398.4" cy="211.0" r="23" fill="url(#h2)"/><circle cx="428.8" cy="235.5" r="23" fill="url(#h3)"/><circle cx="483.8" cy="224.0" r="23" fill="url(#h4)"/><circle cx="489.6" cy="261.6" r="23" fill="url(#h5)"/><circle cx="524.6" cy="209.5" r="22" fill="url(#h6)"/><circle cx="649.0" cy="155.1" r="19" fill="url(#h7)"/><circle cx="534.3" cy="240.6" r="23" fill="url(#h8)"/><circle cx="566.3" cy="250.8" r="23" fill="url(#h9)"/><circle cx="590.3" cy="272.5" r="23" fill="url(#h10)"/><circle cx="618.8" cy="248.5" r="19" fill="url(#h11)"/><circle cx="533.2" cy="269.1" r="23" fill="url(#h12)"/><circle cx="446.4" cy="266.8" r="23" fill="url(#h13)"/><circle cx="457.8" cy="276.0" r="23" fill="url(#h14)"/><circle cx="471.5" cy="355.9" r="23" fill="url(#h15)"/><circle cx="699.6" cy="193.6" r="23" fill="url(#h16)"/><circle cx="704.0" cy="228.3" r="23" fill="url(#h17)"/><circle cx="737.2" cy="224.0" r="23" fill="url(#h18)"/><circle cx="670.7" cy="212.4" r="23" fill="url(#h19)"/><circle cx="751.7" cy="154.5" r="25" fill="url(#h20)"/><circle cx="762.0" cy="118.0" r="23" fill="url(#h21)"/><circle cx="754.6" cy="261.6" r="23" fill="url(#h22)"/><circle cx="633.0" cy="203.7" r="23" fill="url(#h23)"/><circle cx="818.5" cy="187.8" r="23" fill="url(#h24)"/><circle cx="794.0" cy="227.0" r="23" fill="url(#h25)"/><circle cx="824.3" cy="232.6" r="16" fill="url(#h26)"/><circle cx="537.7" cy="365.0" r="16" fill="url(#h27)"/><circle cx="679.5" cy="297.6" r="17" fill="url(#h28)"/><circle cx="695.5" cy="322.7" r="23" fill="url(#h29)"/><circle cx="617.6" cy="326.5" r="23" fill="url(#h30)"/><circle cx="598.2" cy="305.6" r="23" fill="url(#h31)"/><circle cx="611.9" cy="391.3" r="20" fill="url(#h32)"/><circle cx="615.4" cy="369.6" r="23" fill="url(#h33)"/><circle cx="596.0" cy="424.4" r="23" fill="url(#h34)"/><circle cx="550.3" cy="383.4" r="23" fill="url(#h35)"/><circle cx="540.0" cy="303.3" r="23" fill="url(#h36)"/><circle cx="651.0" cy="319.3" r="23" fill="url(#h37)"/><circle cx="670.7" cy="411.0" r="23" fill="url(#h38)"/><circle cx="638.8" cy="385.0" r="23" fill="url(#h39)"/><circle cx="535.5" cy="437.0" r="23" fill="url(#h40)"/><circle cx="586.8" cy="281.0" r="23" fill="url(#h41)"/><circle cx="762.9" cy="285.1" r="29" fill="url(#h42)"/><circle cx="758.3" cy="260.0" r="23" fill="url(#h43)"/><circle cx="785.7" cy="318.2" r="18" fill="url(#h44)"/><circle cx="806.0" cy="299.0" r="23" fill="url(#h45)"/><circle cx="382.5" cy="307.0" r="23" fill="url(#h46)"/><circle cx="350.7" cy="348.9" r="23" fill="url(#h47)"/><circle cx="385.4" cy="350.3" r="23" fill="url(#h48)"/><circle cx="387.5" cy="383.6" r="23" fill="url(#h49)"/><circle cx="423.0" cy="398.0" r="23" fill="url(#h50)"/><circle cx="404.2" cy="429.9" r="23" fill="url(#h51)"/><circle cx="448.7" cy="431.3" r="23" fill="url(#h52)"/><circle cx="395.5" cy="451.6" r="23" fill="url(#h53)"/><circle cx="497.5" cy="360.0" r="21" fill="url(#h54)"/><circle cx="469.3" cy="377.0" r="23" fill="url(#h55)"/><circle cx="437.5" cy="307.0" r="23" fill="url(#h56)"/><circle cx="480.9" cy="347.4" r="23" fill="url(#h57)"/><circle cx="408.6" cy="297.7" r="28" fill="url(#h59)"/><circle cx="408.6" cy="297.7" r="15.6" fill="url(#hs)"/></g>
<circle cx="408.6" cy="297.7" r="3.1" fill="none" stroke="#a89a00" stroke-width="0.8"/><circle cx="408.6" cy="297.7" r="1.1" fill="#a09000"/>
</svg>
<div class="abs" style="left:955px;top:93px;width:66px;height:34px;background:#323232;">
<svg class="abs" style="left:9px;top:8px" width="18" height="18" viewBox="0 0 18 18" fill="none" stroke="#c8c8c8" stroke-width="1.1"><path d="M1.3 8.6 L4 5.9 V2 H6 V4 L8.4 1.6 L15.4 8.6 H14.8 V16.3 H10.5 V10.4 H6.6 V16.3 H2 V8.6 Z"/></svg>
<svg class="abs" style="left:41px;top:8px" width="18" height="18" viewBox="0 0 18 18" fill="none" stroke="#c8c8c8" stroke-width="1"><rect x="1" y="1.5" width="2.6" height="2.6"/><circle cx="2.3" cy="6.9" r="1.3"/><rect x="1" y="9.6" width="2.6" height="2.6"/><path d="M2.3 13.6 L3.7 16.2 H0.9 Z"/><path d="M6 2.8 H15 M6 6.9 H15 M6 10.9 H15 M6 14.9 H15" stroke-width="1.2"/></svg>
</div>
<div class="abs" style="left:990px;top:383px;width:31px;height:58px;background:#323232;">
<div class="abs" style="left:9.5px;top:14px;width:12.5px;height:2px;background:#c0c0c0;"></div><div class="abs" style="left:14.8px;top:8.8px;width:2px;height:12.5px;background:#c0c0c0;"></div>
<div class="abs" style="left:9.5px;top:41.5px;width:12.5px;height:2px;background:#c0c0c0;"></div></div>
<div class="abs" id="attrbox" style="left:704.5px;top:446.5px;width:313px;height:14px;background:rgba(255,255,255,0.65);"></div>
<svg class="abs" style="left:255px;top:474px" width="10" height="14" viewBox="0 0 10 14" fill="none" stroke="#b8b8b8" stroke-width="1.1"><path d="M8.2 1.5 L1.6 7 L8.2 12.5 Z"/></svg>
<svg class="abs" style="left:999px;top:474px" width="10" height="14" viewBox="0 0 10 14" fill="none" stroke="#b8b8b8" stroke-width="1.1"><path d="M1.8 1.5 L8.4 7 L1.8 12.5 Z"/></svg>

<svg class="abs" style="left:234px;top:506px" width="795" height="132" viewBox="234 506 795 132" font-family="Liberation Sans, sans-serif" font-size="11">
<path d="M284.6,558.5H997 M284.6,574.5H997 M284.6,590.5H997 M397.5,558.5V606 M524,558.5V606 M654.5,558.5V606 M782,558.5V606 M909.5,558.5V606" fill="none" stroke="#3d3d3d" stroke-width="1" stroke-dasharray="3 3"/>
<path d="M349.6,606.6v-0.3h2.15v0.3zM351.6,606.6v-0.3h2.15v0.3zM353.7,606.6v-0.3h2.15v0.3zM355.8,606.6v-0.3h2.15v0.3zM357.9,606.6v-0.3h2.15v0.3zM362.1,606.6v-0.3h2.15v0.3zM364.2,606.6v-0.4h2.15v0.4zM366.3,606.6v-0.4h2.15v0.4zM368.4,606.6v-0.4h2.15v0.4zM370.5,606.6v-0.4h2.15v0.4zM372.6,606.6v-0.4h2.15v0.4zM374.7,606.6v-0.3h2.15v0.3zM376.8,606.6v-0.4h2.15v0.4zM378.9,606.6v-0.5h2.15v0.5zM381.0,606.6v-0.5h2.15v0.5zM383.1,606.6v-0.5h2.15v0.5zM385.2,606.6v-0.5h2.15v0.5zM387.3,606.6v-0.4h2.15v0.4zM389.4,606.6v-0.3h2.15v0.3zM391.5,606.6v-0.5h2.15v0.5zM393.6,606.6v-0.5h2.15v0.5zM395.7,606.6v-0.5h2.15v0.5zM397.7,606.6v-0.5h2.15v0.5zM399.8,606.6v-0.4h2.15v0.4zM401.9,606.6v-0.3h2.15v0.3zM404.0,606.6v-0.3h2.15v0.3zM406.1,606.6v-0.4h2.15v0.4zM408.2,606.6v-0.4h2.15v0.4zM410.3,606.6v-0.4h2.15v0.4zM412.4,606.6v-0.3h2.15v0.3zM414.5,606.6v-0.3h2.15v0.3zM416.6,606.6v-0.3h2.15v0.3zM420.8,606.6v-0.3h2.15v0.3zM422.9,606.6v-0.3h2.15v0.3zM425.0,606.6v-0.3h2.15v0.3zM427.1,606.6v-0.3h2.15v0.3zM429.2,606.6v-0.3h2.15v0.3zM454.3,606.6v-0.3h2.15v0.3zM456.4,606.6v-0.3h2.15v0.3zM458.5,606.6v-0.3h2.15v0.3zM460.6,606.6v-0.3h2.15v0.3zM462.7,606.6v-0.3h2.15v0.3zM464.8,606.6v-0.4h2.15v0.4zM466.9,606.6v-0.5h2.15v0.5zM469.0,606.6v-0.5h2.15v0.5zM471.1,606.6v-0.5h2.15v0.5zM473.2,606.6v-0.5h2.15v0.5zM475.3,606.6v-0.4h2.15v0.4zM477.4,606.6v-0.4h2.15v0.4zM479.5,606.6v-0.6h2.15v0.6zM481.6,606.6v-0.6h2.15v0.6zM483.7,606.6v-0.6h2.15v0.6zM485.7,606.6v-0.7h2.15v0.7zM487.8,606.6v-0.7h2.15v0.7zM489.9,606.6v-0.7h2.15v0.7zM492.0,606.6v-0.5h2.15v0.5zM494.1,606.6v-0.8h2.15v0.8zM496.2,606.6v-0.9h2.15v0.9zM498.3,606.6v-1.0h2.15v1.0zM500.4,606.6v-0.9h2.15v0.9zM502.5,606.6v-0.9h2.15v0.9zM504.6,606.6v-0.8h2.15v0.8zM506.7,606.6v-0.7h2.15v0.7zM508.8,606.6v-1.0h2.15v1.0zM510.9,606.6v-1.2h2.15v1.2zM513.0,606.6v-1.1h2.15v1.1zM515.1,606.6v-1.2h2.15v1.2zM517.2,606.6v-1.3h2.15v1.3zM519.3,606.6v-1.2h2.15v1.2zM521.4,606.6v-1.1h2.15v1.1zM523.5,606.6v-1.6h2.15v1.6zM525.6,606.6v-1.8h2.15v1.8zM527.7,606.6v-1.9h2.15v1.9zM529.7,606.6v-1.9h2.15v1.9zM531.8,606.6v-2.1h2.15v2.1zM533.9,606.6v-1.8h2.15v1.8zM536.0,606.6v-1.5h2.15v1.5zM538.1,606.6v-2.2h2.15v2.2zM540.2,606.6v-2.4h2.15v2.4zM542.3,606.6v-2.4h2.15v2.4zM544.4,606.6v-2.4h2.15v2.4zM546.5,606.6v-2.5h2.15v2.5zM548.6,606.6v-2.0h2.15v2.0zM550.7,606.6v-1.2h2.15v1.2zM552.8,606.6v-2.6h2.15v2.6zM554.9,606.6v-2.9h2.15v2.9zM557.0,606.6v-2.9h2.15v2.9zM559.1,606.6v-2.8h2.15v2.8zM561.2,606.6v-2.8h2.15v2.8zM563.3,606.6v-2.3h2.15v2.3zM565.4,606.6v-1.4h2.15v1.4zM567.5,606.6v-3.0h2.15v3.0zM569.6,606.6v-3.6h2.15v3.6zM571.7,606.6v-3.3h2.15v3.3zM573.8,606.6v-3.3h2.15v3.3zM575.8,606.6v-2.9h2.15v2.9zM577.9,606.6v-2.3h2.15v2.3zM580.0,606.6v-1.4h2.15v1.4zM582.1,606.6v-3.0h2.15v3.0zM584.2,606.6v-3.2h2.15v3.2zM586.3,606.6v-2.9h2.15v2.9zM588.4,606.6v-2.7h2.15v2.7zM590.5,606.6v-2.6h2.15v2.6zM592.6,606.6v-2.1h2.15v2.1zM594.7,606.6v-1.3h2.15v1.3zM596.8,606.6v-2.7h2.15v2.7zM598.9,606.6v-2.7h2.15v2.7zM601.0,606.6v-2.6h2.15v2.6zM603.1,606.6v-2.6h2.15v2.6zM605.2,606.6v-2.4h2.15v2.4zM607.3,606.6v-1.8h2.15v1.8zM609.4,606.6v-1.1h2.15v1.1zM611.5,606.6v-2.3h2.15v2.3zM613.6,606.6v-2.4h2.15v2.4zM615.7,606.6v-2.2h2.15v2.2zM617.8,606.6v-2.3h2.15v2.3zM619.8,606.6v-2.2h2.15v2.2zM621.9,606.6v-1.7h2.15v1.7zM624.0,606.6v-1.5h2.15v1.5zM626.1,606.6v-2.1h2.15v2.1zM628.2,606.6v-2.1h2.15v2.1zM630.3,606.6v-1.9h2.15v1.9zM632.4,606.6v-2.0h2.15v2.0zM634.5,606.6v-1.8h2.15v1.8zM636.6,606.6v-1.7h2.15v1.7zM638.7,606.6v-1.3h2.15v1.3zM640.8,606.6v-1.8h2.15v1.8zM642.9,606.6v-1.9h2.15v1.9zM645.0,606.6v-1.9h2.15v1.9zM647.1,606.6v-1.9h2.15v1.9zM649.2,606.6v-1.8h2.15v1.8zM651.3,606.6v-1.6h2.15v1.6zM653.4,606.6v-1.2h2.15v1.2zM655.5,606.6v-1.7h2.15v1.7zM657.6,606.6v-1.9h2.15v1.9zM659.7,606.6v-1.7h2.15v1.7zM661.8,606.6v-1.8h2.15v1.8zM663.8,606.6v-1.6h2.15v1.6zM665.9,606.6v-1.5h2.15v1.5zM668.0,606.6v-1.3h2.15v1.3zM670.1,606.6v-1.9h2.15v1.9zM672.2,606.6v-1.9h2.15v1.9zM674.3,606.6v-2.0h2.15v2.0zM676.4,606.6v-1.8h2.15v1.8zM678.5,606.6v-1.9h2.15v1.9zM680.6,606.6v-1.6h2.15v1.6zM682.7,606.6v-1.4h2.15v1.4zM684.8,606.6v-2.0h2.15v2.0zM686.9,606.6v-2.1h2.15v2.1zM689.0,606.6v-2.0h2.15v2.0zM691.1,606.6v-1.9h2.15v1.9zM693.2,606.6v-1.9h2.15v1.9zM695.3,606.6v-1.8h2.15v1.8zM697.4,606.6v-1.5h2.15v1.5zM699.5,606.6v-2.4h2.15v2.4zM701.6,606.6v-2.7h2.15v2.7zM703.7,606.6v-2.6h2.15v2.6zM705.8,606.6v-2.7h2.15v2.7zM707.8,606.6v-2.8h2.15v2.8zM709.9,606.6v-2.2h2.15v2.2zM712.0,606.6v-1.4h2.15v1.4zM714.1,606.6v-3.6h2.15v3.6zM716.2,606.6v-4.1h2.15v4.1zM718.3,606.6v-4.0h2.15v4.0zM720.4,606.6v-4.3h2.15v4.3zM722.5,606.6v-4.3h2.15v4.3zM724.6,606.6v-3.7h2.15v3.7zM726.7,606.6v-2.3h2.15v2.3zM728.8,606.6v-5.5h2.15v5.5zM730.9,606.6v-6.5h2.15v6.5zM733.0,606.6v-7.1h2.15v7.1zM735.1,606.6v-6.8h2.15v6.8zM737.2,606.6v-6.9h2.15v6.9zM739.3,606.6v-6.4h2.15v6.4zM741.4,606.6v-4.5h2.15v4.5zM743.5,606.6v-10.4h2.15v10.4zM745.6,606.6v-12.0h2.15v12.0zM747.7,606.6v-13.1h2.15v13.1zM749.8,606.6v-13.8h2.15v13.8zM751.9,606.6v-13.1h2.15v13.1zM753.9,606.6v-11.8h2.15v11.8zM756.0,606.6v-7.3h2.15v7.3zM758.1,606.6v-17.0h2.15v17.0zM760.2,606.6v-20.6h2.15v20.6zM762.3,606.6v-20.3h2.15v20.3zM764.4,606.6v-22.0h2.15v22.0zM766.5,606.6v-20.8h2.15v20.8zM768.6,606.6v-18.3h2.15v18.3zM770.7,606.6v-11.2h2.15v11.2zM772.8,606.6v-25.4h2.15v25.4zM774.9,606.6v-29.4h2.15v29.4zM777.0,606.6v-29.0h2.15v29.0zM779.1,606.6v-30.2h2.15v30.2zM781.2,606.6v-30.8h2.15v30.8zM783.3,606.6v-24.2h2.15v24.2zM785.4,606.6v-14.2h2.15v14.2zM787.5,606.6v-31.7h2.15v31.7zM789.6,606.6v-35.0h2.15v35.0zM791.7,606.6v-33.6h2.15v33.6zM793.8,606.6v-33.8h2.15v33.8zM795.9,606.6v-31.5h2.15v31.5zM797.9,606.6v-23.5h2.15v23.5zM800.0,606.6v-14.9h2.15v14.9zM802.1,606.6v-33.9h2.15v33.9zM804.2,606.6v-34.5h2.15v34.5zM806.3,606.6v-34.4h2.15v34.4zM808.4,606.6v-34.2h2.15v34.2zM810.5,606.6v-31.2h2.15v31.2zM812.6,606.6v-24.2h2.15v24.2zM814.7,606.6v-15.1h2.15v15.1zM816.8,606.6v-31.8h2.15v31.8zM818.9,606.6v-36.4h2.15v36.4zM821.0,606.6v-33.8h2.15v33.8zM823.1,606.6v-34.8h2.15v34.8zM825.2,606.6v-31.3h2.15v31.3zM827.3,606.6v-25.8h2.15v25.8zM829.4,606.6v-15.8h2.15v15.8zM831.5,606.6v-33.2h2.15v33.2zM833.6,606.6v-34.7h2.15v34.7zM835.7,606.6v-32.0h2.15v32.0zM837.8,606.6v-33.1h2.15v33.1zM839.9,606.6v-29.8h2.15v29.8zM841.9,606.6v-23.6h2.15v23.6zM844.0,606.6v-14.0h2.15v14.0zM846.1,606.6v-30.1h2.15v30.1zM848.2,606.6v-32.6h2.15v32.6zM850.3,606.6v-33.7h2.15v33.7zM852.4,606.6v-31.1h2.15v31.1zM854.5,606.6v-31.8h2.15v31.8zM856.6,606.6v-23.4h2.15v23.4zM858.7,606.6v-14.4h2.15v14.4zM860.8,606.6v-29.1h2.15v29.1zM862.9,606.6v-30.7h2.15v30.7zM865.0,606.6v-26.8h2.15v26.8zM867.1,606.6v-26.0h2.15v26.0zM869.2,606.6v-24.9h2.15v24.9zM871.3,606.6v-17.0h2.15v17.0zM873.4,606.6v-10.6h2.15v10.6zM875.5,606.6v-21.2h2.15v21.2zM877.6,606.6v-21.6h2.15v21.6zM879.7,606.6v-19.1h2.15v19.1zM881.8,606.6v-17.7h2.15v17.7zM883.9,606.6v-17.7h2.15v17.7zM885.9,606.6v-13.0h2.15v13.0zM888.0,606.6v-7.7h2.15v7.7zM890.1,606.6v-15.9h2.15v15.9zM892.2,606.6v-16.5h2.15v16.5zM894.3,606.6v-13.9h2.15v13.9zM896.4,606.6v-13.6h2.15v13.6zM898.5,606.6v-12.1h2.15v12.1zM900.6,606.6v-8.9h2.15v8.9zM902.7,606.6v-5.5h2.15v5.5zM904.8,606.6v-11.3h2.15v11.3zM906.9,606.6v-12.0h2.15v12.0zM909.0,606.6v-10.3h2.15v10.3zM911.1,606.6v-10.3h2.15v10.3zM913.2,606.6v-9.5h2.15v9.5zM915.3,606.6v-7.3h2.15v7.3zM917.4,606.6v-4.4h2.15v4.4zM919.5,606.6v-9.5h2.15v9.5zM921.6,606.6v-9.5h2.15v9.5zM923.7,606.6v-9.5h2.15v9.5zM925.8,606.6v-8.7h2.15v8.7zM927.9,606.6v-8.2h2.15v8.2zM930.0,606.6v-6.4h2.15v6.4zM932.0,606.6v-3.9h2.15v3.9zM934.1,606.6v-7.9h2.15v7.9zM936.2,606.6v-8.4h2.15v8.4zM938.3,606.6v-8.0h2.15v8.0zM940.4,606.6v-8.0h2.15v8.0zM942.5,606.6v-7.8h2.15v7.8zM944.6,606.6v-5.9h2.15v5.9zM946.7,606.6v-3.5h2.15v3.5zM948.8,606.6v-7.4h2.15v7.4zM950.9,606.6v-8.2h2.15v8.2zM953.0,606.6v-7.6h2.15v7.6zM955.1,606.6v-7.7h2.15v7.7zM957.2,606.6v-7.2h2.15v7.2zM959.3,606.6v-5.8h2.15v5.8zM961.4,606.6v-3.8h2.15v3.8zM963.5,606.6v-8.6h2.15v8.6zM965.6,606.6v-9.3h2.15v9.3zM967.7,606.6v-8.9h2.15v8.9zM969.8,606.6v-9.4h2.15v9.4zM971.9,606.6v-8.8h2.15v8.8zM974.0,606.6v-6.6h2.15v6.6zM976.0,606.6v-4.2h2.15v4.2zM978.1,606.6v-10.1h2.15v10.1zM980.2,606.6v-11.1h2.15v11.1zM982.3,606.6v-10.8h2.15v10.8zM984.4,606.6v-10.5h2.15v10.5zM986.5,606.6v-9.8h2.15v9.8zM988.6,606.6v-7.6h2.15v7.6zM990.7,606.6v-4.9h2.15v4.9zM992.8,606.6v-10.8h2.15v10.8zM994.9,606.6v-9.7h2.15v9.7z" fill="#ffaa00"/>
<path d="M284.6,606.6H997" stroke="#ffaa00" stroke-width="1" fill="none" opacity="0.9"/>
<path d="M284.6,558V607 M279,558.5H284.6 M279,574.5H284.6 M279,590.5H284.6 M279,606.5H284.6 M397.5,606.5V611.5 M524,606.5V611.5 M654.5,606.5V611.5 M782,606.5V611.5 M909.5,606.5V611.5" fill="none" stroke="#9a9a9a" stroke-width="1"/>
<text x="272.3" y="563.1" text-anchor="end" fill="#bdbab0">6k</text>
<text x="272.3" y="579.1" text-anchor="end" fill="#bdbab0">4k</text>
<text x="272.3" y="595.1" text-anchor="end" fill="#bdbab0">2k</text>
<text x="272.3" y="611.1" text-anchor="end" fill="#bdbab0">0</text>
<text x="400.7" y="624.8" fill="#bdbab0">M05</text>
<text x="527.2" y="624.8" fill="#bdbab0">M07</text>
<text x="657.7" y="624.8" fill="#bdbab0">M09</text>
<text x="785.2" y="624.8" fill="#bdbab0">M11</text>
<text x="912.7" y="624.8" fill="#c8c6be" font-weight="bold">2021</text>
<g font-size="11" fill="#c4c4c4" text-anchor="middle" style="paint-order:stroke;stroke:#3a3a3a;stroke-width:0.35px;">
<text x="285.5" y="602.2">3</text>
<text x="287.6" y="602.2">3</text>
<text x="289.7" y="602.2">6</text>
<text x="291.8" y="602.1">7</text>
<text x="293.9" y="602.1">7</text>
<text x="296.0" y="602.1">8</text>
<text x="298.1" y="602.1">9</text>
<text x="300.2" y="602.1">9</text>
<text x="302.3" y="602.1">8</text>
<text x="304.4" y="602.1">12</text>
<text x="306.5" y="602.1">13</text>
<text x="308.5" y="602.1">14</text>
<text x="310.6" y="602.1">14</text>
<text x="312.7" y="602.1">14</text>
<text x="314.8" y="602.1">13</text>
<text x="316.9" y="602.1">12</text>
<text x="319.0" y="602.0">19</text>
<text x="321.1" y="602.0">20</text>
<text x="323.2" y="602.0">21</text>
<text x="325.3" y="602.0">20</text>
<text x="327.4" y="602.0">21</text>
<text x="329.5" y="602.0">19</text>
<text x="331.6" y="602.1">16</text>
<text x="333.7" y="602.0">25</text>
<text x="335.8" y="602.0">27</text>
<text x="337.9" y="602.0">26</text>
<text x="340.0" y="602.0">28</text>
<text x="342.1" y="602.0">28</text>
<text x="344.2" y="602.0">24</text>
<text x="346.3" y="602.0">20</text>
<text x="348.4" y="602.0">31</text>
<text x="350.5" y="601.9">32</text>
<text x="352.6" y="601.9">34</text>
<text x="354.6" y="601.9">35</text>
<text x="356.7" y="601.9">35</text>
<text x="358.8" y="601.9">31</text>
<text x="360.9" y="602.0">28</text>
<text x="363.0" y="601.9">43</text>
<text x="365.1" y="601.8">48</text>
<text x="367.2" y="601.8">49</text>
<text x="369.3" y="601.8">49</text>
<text x="371.4" y="601.8">49</text>
<text x="373.5" y="601.8">46</text>
<text x="375.6" y="601.9">38</text>
<text x="377.7" y="601.8">56</text>
<text x="379.8" y="601.7">61</text>
<text x="381.9" y="601.7">65</text>
<text x="384.0" y="601.7">62</text>
<text x="386.1" y="601.7">62</text>
<text x="388.2" y="601.8">56</text>
<text x="390.3" y="601.9">42</text>
<text x="392.4" y="601.7">61</text>
<text x="394.5" y="601.7">61</text>
<text x="396.6" y="601.7">57</text>
<text x="398.6" y="601.7">58</text>
<text x="400.7" y="601.8">50</text>
<text x="402.8" y="601.9">43</text>
<text x="404.9" y="601.9">33</text>
<text x="407.0" y="601.8">48</text>
<text x="409.1" y="601.8">47</text>
<text x="411.2" y="601.8">44</text>
<text x="413.3" y="601.9">43</text>
<text x="415.4" y="601.9">38</text>
<text x="417.5" y="601.9">32</text>
<text x="419.6" y="602.0">26</text>
<text x="421.7" y="601.9">35</text>
<text x="423.8" y="601.9">35</text>
<text x="425.9" y="601.9">34</text>
<text x="428.0" y="601.9">34</text>
<text x="430.1" y="601.9">32</text>
<text x="432.2" y="602.0">26</text>
<text x="434.3" y="602.0">20</text>
<text x="436.4" y="602.0">29</text>
<text x="438.5" y="602.0">30</text>
<text x="440.6" y="602.0">27</text>
<text x="442.6" y="602.0">27</text>
<text x="444.7" y="602.0">26</text>
<text x="446.8" y="602.0">22</text>
<text x="448.9" y="602.1">17</text>
<text x="451.0" y="602.0">28</text>
<text x="453.1" y="602.0">30</text>
<text x="455.2" y="601.9">34</text>
<text x="457.3" y="601.9">39</text>
<text x="459.4" y="601.9">40</text>
<text x="461.5" y="601.9">36</text>
<text x="463.6" y="601.9">33</text>
<text x="465.7" y="601.8">51</text>
<text x="467.8" y="601.7">57</text>
<text x="469.9" y="601.7">56</text>
<text x="472.0" y="601.7">58</text>
<text x="474.1" y="601.7">61</text>
<text x="476.2" y="601.8">54</text>
<text x="478.3" y="601.8">47</text>
<text x="480.4" y="601.6">76</text>
<text x="482.5" y="601.6">78</text>
<text x="484.6" y="601.6">78</text>
<text x="486.6" y="601.5">82</text>
<text x="488.7" y="601.5">84</text>
<text x="490.8" y="601.5">82</text>
<text x="492.9" y="601.7">66</text>
<text x="495.0" y="601.4">101</text>
<text x="497.1" y="601.3">107</text>
<text x="499.2" y="601.2">119</text>
<text x="501.3" y="601.3">116</text>
<text x="503.4" y="601.3">114</text>
<text x="505.5" y="601.4">101</text>
<text x="507.6" y="601.5">84</text>
<text x="509.7" y="601.2">130</text>
<text x="511.8" y="601.0">147</text>
<text x="513.9" y="601.1">140</text>
<text x="516.0" y="601.0">149</text>
<text x="518.1" y="600.9">163</text>
<text x="520.2" y="601.0">149</text>
<text x="522.3" y="601.1">138</text>
<text x="524.4" y="600.6">197</text>
<text x="526.5" y="600.4">227</text>
<text x="528.6" y="600.3">240</text>
<text x="530.7" y="600.3">241</text>
<text x="532.7" y="600.1">260</text>
<text x="534.8" y="600.4">225</text>
<text x="536.9" y="600.7">183</text>
<text x="539.0" y="600.0">281</text>
<text x="541.1" y="599.8">295</text>
<text x="543.2" y="599.8">303</text>
<text x="545.3" y="599.8">300</text>
<text x="547.4" y="599.7">312</text>
<text x="549.5" y="600.2">247</text>
<text x="551.6" y="601.0">153</text>
<text x="553.7" y="599.6">322</text>
<text x="555.8" y="599.3">362</text>
<text x="557.9" y="599.3">356</text>
<text x="560.0" y="599.4">356</text>
<text x="562.1" y="599.4">347</text>
<text x="564.2" y="599.9">292</text>
<text x="566.3" y="600.8">174</text>
<text x="568.4" y="599.2">379</text>
<text x="570.5" y="598.6">452</text>
<text x="572.6" y="598.9">414</text>
<text x="574.7" y="598.9">416</text>
<text x="576.7" y="599.3">367</text>
<text x="578.8" y="599.9">294</text>
<text x="580.9" y="600.8">176</text>
<text x="583.0" y="599.2">379</text>
<text x="585.1" y="599.0">398</text>
<text x="587.2" y="599.3">367</text>
<text x="589.3" y="599.5">339</text>
<text x="591.4" y="599.6">320</text>
<text x="593.5" y="600.1">260</text>
<text x="595.6" y="600.9">160</text>
<text x="597.7" y="599.5">340</text>
<text x="599.8" y="599.5">337</text>
<text x="601.9" y="599.6">329</text>
<text x="604.0" y="599.6">321</text>
<text x="606.1" y="599.8">295</text>
<text x="608.2" y="600.4">228</text>
<text x="610.3" y="601.1">136</text>
<text x="612.4" y="599.9">290</text>
<text x="614.5" y="599.8">302</text>
<text x="616.6" y="600.0">277</text>
<text x="618.7" y="599.9">286</text>
<text x="620.7" y="600.0">272</text>
<text x="622.8" y="600.5">212</text>
<text x="624.9" y="600.7">182</text>
<text x="627.0" y="600.1">261</text>
<text x="629.1" y="600.1">259</text>
<text x="631.2" y="600.3">231</text>
<text x="633.3" y="600.2">248</text>
<text x="635.4" y="600.4">221</text>
<text x="637.5" y="600.5">208</text>
<text x="639.6" y="600.9">162</text>
<text x="641.7" y="600.4">222</text>
<text x="643.8" y="600.3">233</text>
<text x="645.9" y="600.3">237</text>
<text x="648.0" y="600.3">232</text>
<text x="650.1" y="600.4">227</text>
<text x="652.2" y="600.6">200</text>
<text x="654.3" y="601.0">149</text>
<text x="656.4" y="600.5">213</text>
<text x="658.5" y="600.3">242</text>
<text x="660.6" y="600.5">215</text>
<text x="662.7" y="600.4">230</text>
<text x="664.7" y="600.6">206</text>
<text x="666.8" y="600.7">194</text>
<text x="668.9" y="600.9">157</text>
<text x="671.0" y="600.3">235</text>
<text x="673.1" y="600.3">240</text>
<text x="675.2" y="600.2">245</text>
<text x="677.3" y="600.4">229</text>
<text x="679.4" y="600.3">235</text>
<text x="681.5" y="600.6">199</text>
<text x="683.6" y="600.8">172</text>
<text x="685.7" y="600.2">251</text>
<text x="687.8" y="600.1">257</text>
<text x="689.9" y="600.2">255</text>
<text x="692.0" y="600.3">242</text>
<text x="694.1" y="600.3">237</text>
<text x="696.2" y="600.4">220</text>
<text x="698.3" y="600.7">187</text>
<text x="700.4" y="599.8">300</text>
<text x="702.5" y="599.5">333</text>
<text x="704.6" y="599.6">323</text>
<text x="706.7" y="599.5">341</text>
<text x="708.8" y="599.4">354</text>
<text x="710.8" y="600.0">281</text>
<text x="712.9" y="600.8">174</text>
<text x="715.0" y="598.6">445</text>
<text x="717.1" y="598.1">515</text>
<text x="719.2" y="598.2">494</text>
<text x="721.3" y="597.9">543</text>
<text x="723.4" y="597.9">540</text>
<text x="725.5" y="598.5">462</text>
<text x="727.6" y="599.9">291</text>
<text x="729.7" y="596.7">681</text>
<text x="731.8" y="595.7">814</text>
<text x="733.9" y="595.1">885</text>
<text x="736.0" y="595.4">854</text>
<text x="738.1" y="595.3">867</text>
<text x="740.2" y="595.8">795</text>
<text x="742.3" y="597.7">567</text>
<text x="744.4" y="591.8">1k</text>
<text x="746.5" y="590.2">2k</text>
<text x="748.6" y="589.1">2k</text>
<text x="750.7" y="588.4">2k</text>
<text x="752.8" y="589.1">2k</text>
<text x="754.8" y="590.4">1k</text>
<text x="756.9" y="594.9">917</text>
<text x="759.0" y="585.2">2k</text>
<text x="761.1" y="581.6">3k</text>
<text x="763.2" y="581.9">3k</text>
<text x="765.3" y="580.2">3k</text>
<text x="767.4" y="581.4">3k</text>
<text x="769.5" y="583.9">2k</text>
<text x="771.6" y="591.0">1k</text>
<text x="773.7" y="576.8">3k</text>
<text x="775.8" y="572.8">4k</text>
<text x="777.9" y="573.2">4k</text>
<text x="780.0" y="572.0">4k</text>
<text x="782.1" y="571.4">4k</text>
<text x="784.2" y="578.0">3k</text>
<text x="786.3" y="588.0">2k</text>
<text x="788.4" y="570.5">4k</text>
<text x="790.5" y="567.2">4k</text>
<text x="792.6" y="568.6">4k</text>
<text x="794.7" y="568.4">4k</text>
<text x="796.8" y="570.7">4k</text>
<text x="798.8" y="578.7">3k</text>
<text x="800.9" y="587.3">2k</text>
<text x="803.0" y="568.3">4k</text>
<text x="805.1" y="567.7">4k</text>
<text x="807.2" y="567.8">4k</text>
<text x="809.3" y="568.0">4k</text>
<text x="811.4" y="571.0">4k</text>
<text x="813.5" y="578.0">3k</text>
<text x="815.6" y="587.1">2k</text>
<text x="817.7" y="570.4">4k</text>
<text x="819.8" y="565.8">5k</text>
<text x="821.9" y="568.4">4k</text>
<text x="824.0" y="567.4">4k</text>
<text x="826.1" y="570.9">4k</text>
<text x="828.2" y="576.4">3k</text>
<text x="830.3" y="586.4">2k</text>
<text x="832.4" y="569.0">4k</text>
<text x="834.5" y="567.5">4k</text>
<text x="836.6" y="570.2">4k</text>
<text x="838.7" y="569.1">4k</text>
<text x="840.8" y="572.4">4k</text>
<text x="842.8" y="578.6">3k</text>
<text x="844.9" y="588.2">2k</text>
<text x="847.0" y="572.1">4k</text>
<text x="849.1" y="569.6">4k</text>
<text x="851.2" y="568.5">4k</text>
<text x="853.3" y="571.1">4k</text>
<text x="855.4" y="570.4">4k</text>
<text x="857.5" y="578.8">3k</text>
<text x="859.6" y="587.8">2k</text>
<text x="861.7" y="573.1">4k</text>
<text x="863.8" y="571.5">4k</text>
<text x="865.9" y="575.4">3k</text>
<text x="868.0" y="576.2">3k</text>
<text x="870.1" y="577.3">3k</text>
<text x="872.2" y="585.2">2k</text>
<text x="874.3" y="591.6">1k</text>
<text x="876.4" y="581.0">3k</text>
<text x="878.5" y="580.6">3k</text>
<text x="880.6" y="583.1">2k</text>
<text x="882.7" y="584.5">2k</text>
<text x="884.8" y="584.5">2k</text>
<text x="886.9" y="589.2">2k</text>
<text x="888.9" y="594.5">967</text>
<text x="891.0" y="586.3">2k</text>
<text x="893.1" y="585.7">2k</text>
<text x="895.2" y="588.3">2k</text>
<text x="897.3" y="588.6">2k</text>
<text x="899.4" y="590.1">2k</text>
<text x="901.5" y="593.3">1k</text>
<text x="903.6" y="596.7">683</text>
<text x="905.7" y="590.9">1k</text>
<text x="907.8" y="590.2">1k</text>
<text x="909.9" y="591.9">1k</text>
<text x="912.0" y="591.9">1k</text>
<text x="914.1" y="592.7">1k</text>
<text x="916.2" y="594.9">912</text>
<text x="918.3" y="597.8">552</text>
<text x="920.4" y="592.7">1k</text>
<text x="922.5" y="592.7">1k</text>
<text x="924.6" y="592.7">1k</text>
<text x="926.7" y="593.5">1k</text>
<text x="928.8" y="594.0">1k</text>
<text x="930.9" y="595.8">799</text>
<text x="932.9" y="598.3">485</text>
<text x="935.0" y="594.3">993</text>
<text x="937.1" y="593.8">1k</text>
<text x="939.2" y="594.2">1k</text>
<text x="941.3" y="594.2">1k</text>
<text x="943.4" y="594.4">973</text>
<text x="945.5" y="596.3">738</text>
<text x="947.6" y="598.7">434</text>
<text x="949.7" y="594.8">924</text>
<text x="951.8" y="594.0">1k</text>
<text x="953.9" y="594.6">951</text>
<text x="956.0" y="594.5">966</text>
<text x="958.1" y="595.0">899</text>
<text x="960.2" y="596.4">724</text>
<text x="962.3" y="598.4">479</text>
<text x="964.4" y="593.6">1k</text>
<text x="966.5" y="592.9">1k</text>
<text x="968.6" y="593.3">1k</text>
<text x="970.7" y="592.8">1k</text>
<text x="972.8" y="593.4">1k</text>
<text x="974.9" y="595.6">828</text>
<text x="976.9" y="598.0">522</text>
<text x="979.0" y="592.1">1k</text>
<text x="981.1" y="591.1">1k</text>
<text x="983.2" y="591.4">1k</text>
<text x="985.3" y="591.7">1k</text>
<text x="987.4" y="592.4">1k</text>
<text x="989.5" y="594.6">949</text>
<text x="991.6" y="597.3">615</text>
<text x="993.7" y="591.4">1k</text>
<text x="995.8" y="592.5">1k</text>
</g>
</svg>
<svg class="abs" style="left:1039px;top:145px" width="216" height="512" viewBox="1039 145 216 512" font-family="Liberation Sans, sans-serif" font-size="11">
<path d="M1144,219.1H1226 M1144,248.6H1226 M1144,278.0H1226 M1144,307.5H1226 M1144,336.9H1226 M1144,366.4H1226 M1144,395.9H1226 M1144,425.3H1226 M1144,454.8H1226 M1144,484.2H1226 M1144,513.7H1226 M1144,543.2H1226 M1144,572.6H1226 M1144,602.1H1226 M1225.5,219.1V630" fill="none" stroke="#444" stroke-width="1" stroke-dasharray="3 3"/>
<rect x="1144" y="219.70" width="55.8" height="12.9" fill="#ffaa00" stroke="#ffbe3c" stroke-width="0.6"/>
<rect x="1144" y="234.43" width="24.8" height="12.9" fill="#ffaa00" stroke="#ffbe3c" stroke-width="0.6"/>
<rect x="1144" y="249.16" width="18.9" height="12.9" fill="#ffaa00" stroke="#ffbe3c" stroke-width="0.6"/>
<rect x="1144" y="263.89" width="18.1" height="12.9" fill="#ffaa00" stroke="#ffbe3c" stroke-width="0.6"/>
<rect x="1144" y="278.62" width="13.3" height="12.9" fill="#ffaa00" stroke="#ffbe3c" stroke-width="0.6"/>
<rect x="1144" y="293.35" width="12.8" height="12.9" fill="#ffaa00" stroke="#ffbe3c" stroke-width="0.6"/>
<rect x="1144" y="308.08" width="10.6" height="12.9" fill="#ffaa00" stroke="#ffbe3c" stroke-width="0.6"/>
<rect x="1144" y="322.81" width="9.4" height="12.9" fill="#ffaa00" stroke="#ffbe3c" stroke-width="0.6"/>
<rect x="1144" y="337.54" width="9.0" height="12.9" fill="#ffaa00" stroke="#ffbe3c" stroke-width="0.6"/>
<rect x="1144" y="352.27" width="8.9" height="12.9" fill="#ffaa00" stroke="#ffbe3c" stroke-width="0.6"/>
<rect x="1144" y="367.00" width="8.9" height="12.9" fill="#ffaa00" stroke="#ffbe3c" stroke-width="0.6"/>
<rect x="1144" y="381.73" width="8.7" height="12.9" fill="#ffaa00" stroke="#ffbe3c" stroke-width="0.6"/>
<rect x="1144" y="396.46" width="7.5" height="12.9" fill="#ffaa00" stroke="#ffbe3c" stroke-width="0.6"/>
<rect x="1144" y="411.19" width="7.5" height="12.9" fill="#ffaa00" stroke="#ffbe3c" stroke-width="0.6"/>
<rect x="1144" y="425.92" width="7.3" height="12.9" fill="#ffaa00" stroke="#ffbe3c" stroke-width="0.6"/>
<rect x="1144" y="440.65" width="6.5" height="12.9" fill="#ffaa00" stroke="#ffbe3c" stroke-width="0.6"/>
<rect x="1144" y="455.38" width="5.9" height="12.9" fill="#ffaa00" stroke="#ffbe3c" stroke-width="0.6"/>
<rect x="1144" y="470.11" width="5.6" height="12.9" fill="#ffaa00" stroke="#ffbe3c" stroke-width="0.6"/>
<rect x="1144" y="484.84" width="5.3" height="12.9" fill="#ffaa00" stroke="#ffbe3c" stroke-width="0.6"/>
<rect x="1144" y="499.57" width="5.0" height="12.9" fill="#ffaa00" stroke="#ffbe3c" stroke-width="0.6"/>
<rect x="1144" y="514.30" width="5.0" height="12.9" fill="#ffaa00" stroke="#ffbe3c" stroke-width="0.6"/>
<rect x="1144" y="529.03" width="5.0" height="12.9" fill="#ffaa00" stroke="#ffbe3c" stroke-width="0.6"/>
<rect x="1144" y="543.76" width="5.0" height="12.9" fill="#ffaa00" stroke="#ffbe3c" stroke-width="0.6"/>
<rect x="1144" y="558.49" width="4.5" height="12.9" fill="#ffaa00" stroke="#ffbe3c" stroke-width="0.6"/>
<rect x="1144" y="573.22" width="4.1" height="12.9" fill="#ffaa00" stroke="#ffbe3c" stroke-width="0.6"/>
<rect x="1144" y="587.95" width="3.8" height="12.9" fill="#ffaa00" stroke="#ffbe3c" stroke-width="0.6"/>
<rect x="1144" y="602.68" width="3.5" height="12.9" fill="#ffaa00" stroke="#ffbe3c" stroke-width="0.6"/>
<rect x="1144" y="617.41" width="3.1" height="12.9" fill="#ffaa00" stroke="#ffbe3c" stroke-width="0.6"/>
<path d="M1144.5,219.1V634.5 M1144,630.5H1226 M1225.5,630.5V634.5" fill="none" stroke="#8e8e8e" stroke-width="1"/>
<path d="M1138.5,226.5H1144 M1138.5,255.5H1144 M1138.5,285.5H1144 M1138.5,314.5H1144 M1138.5,343.5H1144 M1138.5,373.5H1144 M1138.5,402.5H1144 M1138.5,432.5H1144 M1138.5,461.5H1144 M1138.5,491.5H1144 M1138.5,520.5H1144 M1138.5,550.5H1144 M1138.5,579.5H1144 M1138.5,609.5H1144" fill="none" stroke="#8e8e8e" stroke-width="1"/>
<text x="1131.5" y="230.9" text-anchor="end" fill="#bdbab0" font-size="11.25">София-град</text>
<text x="1203.4" y="230.9" fill="#cecece">136k</text>
<text x="1172.4" y="245.7" fill="#cecece">60.6k</text>
<text x="1131.5" y="260.4" text-anchor="end" fill="#bdbab0" font-size="11.25">Варна</text>
<text x="1166.5" y="260.4" fill="#cecece">46.2k</text>
<text x="1165.7" y="275.1" fill="#cecece">44.1k</text>
<text x="1131.5" y="289.9" text-anchor="end" fill="#bdbab0" font-size="11.25">Благоевград</text>
<text x="1160.9" y="289.9" fill="#cecece">32.5k</text>
<text x="1160.4" y="304.6" fill="#cecece">31.2k</text>
<text x="1131.5" y="319.3" text-anchor="end" fill="#bdbab0" font-size="11.25">Пазарджик</text>
<text x="1158.2" y="319.3" fill="#cecece">25.9k</text>
<text x="1157.0" y="334.1" fill="#cecece">23k</text>
<text x="1131.5" y="348.8" text-anchor="end" fill="#bdbab0" font-size="11.25">Кърджали</text>
<text x="1156.6" y="348.8" fill="#cecece">22k</text>
<text x="1156.5" y="363.5" fill="#cecece">21.8k</text>
<text x="1131.5" y="378.2" text-anchor="end" fill="#bdbab0" font-size="11.25">Хасково</text>
<text x="1156.5" y="378.2" fill="#cecece">21.7k</text>
<text x="1156.3" y="393.0" fill="#cecece">21.1k</text>
<text x="1131.5" y="407.7" text-anchor="end" fill="#bdbab0" font-size="11.25">София</text>
<text x="1155.1" y="407.7" fill="#cecece">18.3k</text>
<text x="1155.1" y="422.4" fill="#cecece">18.2k</text>
<text x="1131.5" y="437.2" text-anchor="end" fill="#bdbab0" font-size="11.25">Шумен</text>
<text x="1154.9" y="437.2" fill="#cecece">17.9k</text>
<text x="1154.1" y="451.9" fill="#cecece">15.9k</text>
<text x="1131.5" y="466.6" text-anchor="end" fill="#bdbab0" font-size="11.25">Враца</text>
<text x="1153.5" y="466.6" fill="#cecece">14.5k</text>
<text x="1153.2" y="481.4" fill="#cecece">13.7k</text>
<text x="1131.5" y="496.1" text-anchor="end" fill="#bdbab0" font-size="11.25">Ямбол</text>
<text x="1152.9" y="496.1" fill="#cecece">13k</text>
<text x="1152.6" y="510.8" fill="#cecece">12.2k</text>
<text x="1131.5" y="525.5" text-anchor="end" fill="#bdbab0" font-size="11.25">Разград</text>
<text x="1152.6" y="525.5" fill="#cecece">12.2k</text>
<text x="1152.6" y="540.3" fill="#cecece">12.1k</text>
<text x="1131.5" y="555.0" text-anchor="end" fill="#bdbab0" font-size="11.25">Монтана</text>
<text x="1152.6" y="555.0" fill="#cecece">12.1k</text>
<text x="1152.1" y="569.7" fill="#cecece">10.9k</text>
<text x="1131.5" y="584.5" text-anchor="end" fill="#bdbab0" font-size="11.25">Търговище</text>
<text x="1151.7" y="584.5" fill="#cecece">10k</text>
<text x="1151.4" y="599.2" fill="#cecece">9.3k</text>
<text x="1131.5" y="613.9" text-anchor="end" fill="#bdbab0" font-size="11.25">Смолян</text>
<text x="1151.1" y="613.9" fill="#cecece">8.6k</text>
<text x="1150.7" y="628.7" fill="#cecece">7.6k</text>
<text x="1144" y="654" text-anchor="middle" fill="#bdbab0">0</text><text x="1225.3" y="654" text-anchor="middle" fill="#bdbab0">200k</text>
</svg>
<div class="t" id="title" style="left:13.46px;top:10.40px;font-size:22.8px;color:#cfccc2;letter-spacing:0.721px;">Актуална информация за Covid 19 в България</div>
<div class="t" id="l1" style="left:38.62px;top:64.15px;font-size:14px;color:#fff;letter-spacing:0.153px;">Нови случаи за днес</div>
<div class="t" id="n1" style="left:67.06px;top:87.46px;font-size:33.6px;color:#fff;font-weight:700;letter-spacing:1.226px;">1,212</div>
<div class="t" id="s1" style="left:18.27px;top:125.37px;font-size:13.5px;color:#fff;">▲ 97 случая повече от вчера</div>
<div class="t" id="l2" style="left:80.25px;top:157.75px;font-size:13px;color:#fff0c0;letter-spacing:0.430px;">Заболели</div>
<div class="t" id="n2" style="left:20.10px;top:175.31px;font-size:48.3px;color:#fff;letter-spacing:0.081px;-webkit-text-stroke:1.2px #fff;">226,061</div>
<div class="t" id="l3" style="left:75.59px;top:245.91px;font-size:12.8px;color:#dcffd0;letter-spacing:0.268px;">Излекувани</div>
<div class="t" id="n3" style="left:20.40px;top:263.44px;font-size:47.8px;color:#fff;letter-spacing:1.274px;-webkit-text-stroke:1.6px #fff;">194,514</div>
<div class="t" id="l4" style="left:80.54px;top:330.90px;font-size:13px;color:#ffdcdc;letter-spacing:0.439px;">Починали</div>
<div class="t" id="n4" style="left:42.45px;top:349.22px;font-size:51.6px;color:#fff;font-weight:700;letter-spacing:2.157px;">9,482</div>
<div class="t" id="l5" style="left:47.90px;top:418.47px;font-size:12.2px;color:#bdbdbd;letter-spacing:-0.123px;">Карантинирани досега</div>
<div class="t" id="n5" style="left:23.98px;top:435.65px;font-size:45.3px;color:#fff;letter-spacing:0.758px;-webkit-text-stroke:1.7px #fff;">729,931</div>
<div class="t" id="s5" style="left:30.44px;top:487.97px;font-size:21px;color:#cbc8bf;letter-spacing:1.231px;">21,611 активни</div>
<div class="t" id="l6" style="left:69.40px;top:529.67px;font-size:12.2px;color:#bdbdbd;letter-spacing:0.132px;">Брой тествани</div>
<div class="t" id="n6" style="left:20.19px;top:547.49px;font-size:38.4px;color:#fff;letter-spacing:1.192px;-webkit-text-stroke:1.7px #fff;">1,480,714</div>
<div class="t" id="l7" style="left:91.53px;top:606.56px;font-size:18px;color:#c8c8c8;letter-spacing:-0.353px;">дата</div>
<div class="t" id="n7" style="left:57.24px;top:629.29px;font-size:19.5px;color:#cbc8bf;letter-spacing:0.895px;">10/02/2021</div>
<div class="t" id="m1" style="left:1086.17px;top:63.30px;font-size:28px;color:#fff;letter-spacing:0.833px;">Мобилна</div>
<div class="t" id="m2" style="left:1100.90px;top:96.40px;font-size:28px;color:#fff;letter-spacing:0.916px;">версия</div>
<div class="t" id="rt1" style="left:1045.03px;top:155.00px;font-size:14.3px;color:#c8c5bb;letter-spacing:0.258px;">Брой карантинирани по</div>
<div class="t" id="rt2" style="left:1045.37px;top:175.30px;font-size:14.3px;color:#c8c5bb;letter-spacing:0.263px;">области</div>
<div class="t" id="mt" style="left:240.67px;top:66.40px;font-size:11.7px;color:#c9c9c9;font-weight:700;letter-spacing:0.081px;">Концентрация на карантинирани лица</div>
<div class="t" id="cl" style="left:533.80px;top:472.64px;font-size:12px;color:#c4c4c4;letter-spacing:0.444px;">Концентрация на карантинирани</div>
<div class="t" id="ct" style="left:239.12px;top:515.25px;font-size:14px;color:#c8c5bb;letter-spacing:0.375px;">Брой заболели по дни</div>
<div class="t" id="attr" style="left:705.40px;top:447.84px;font-size:12px;color:#3c3c3c;letter-spacing:0.624px;">Map data © OpenStreetMap contributors, CC-BY-SA</div>
<div class="t" id="tb1" style="left:258.91px;top:645.64px;font-size:12px;color:#c4c4c4;letter-spacing:0.485px;">Заболели по дни</div>
<div class="t" id="tb2" style="left:389.31px;top:645.64px;font-size:12px;color:#c4c4c4;letter-spacing:0.344px;">Заболели с натрупване</div>
<div class="t" id="tb3" style="left:556.00px;top:645.64px;font-size:12px;color:#c4c4c4;letter-spacing:0.316px;">Карантинирани по дни</div>

</body>
</html>
